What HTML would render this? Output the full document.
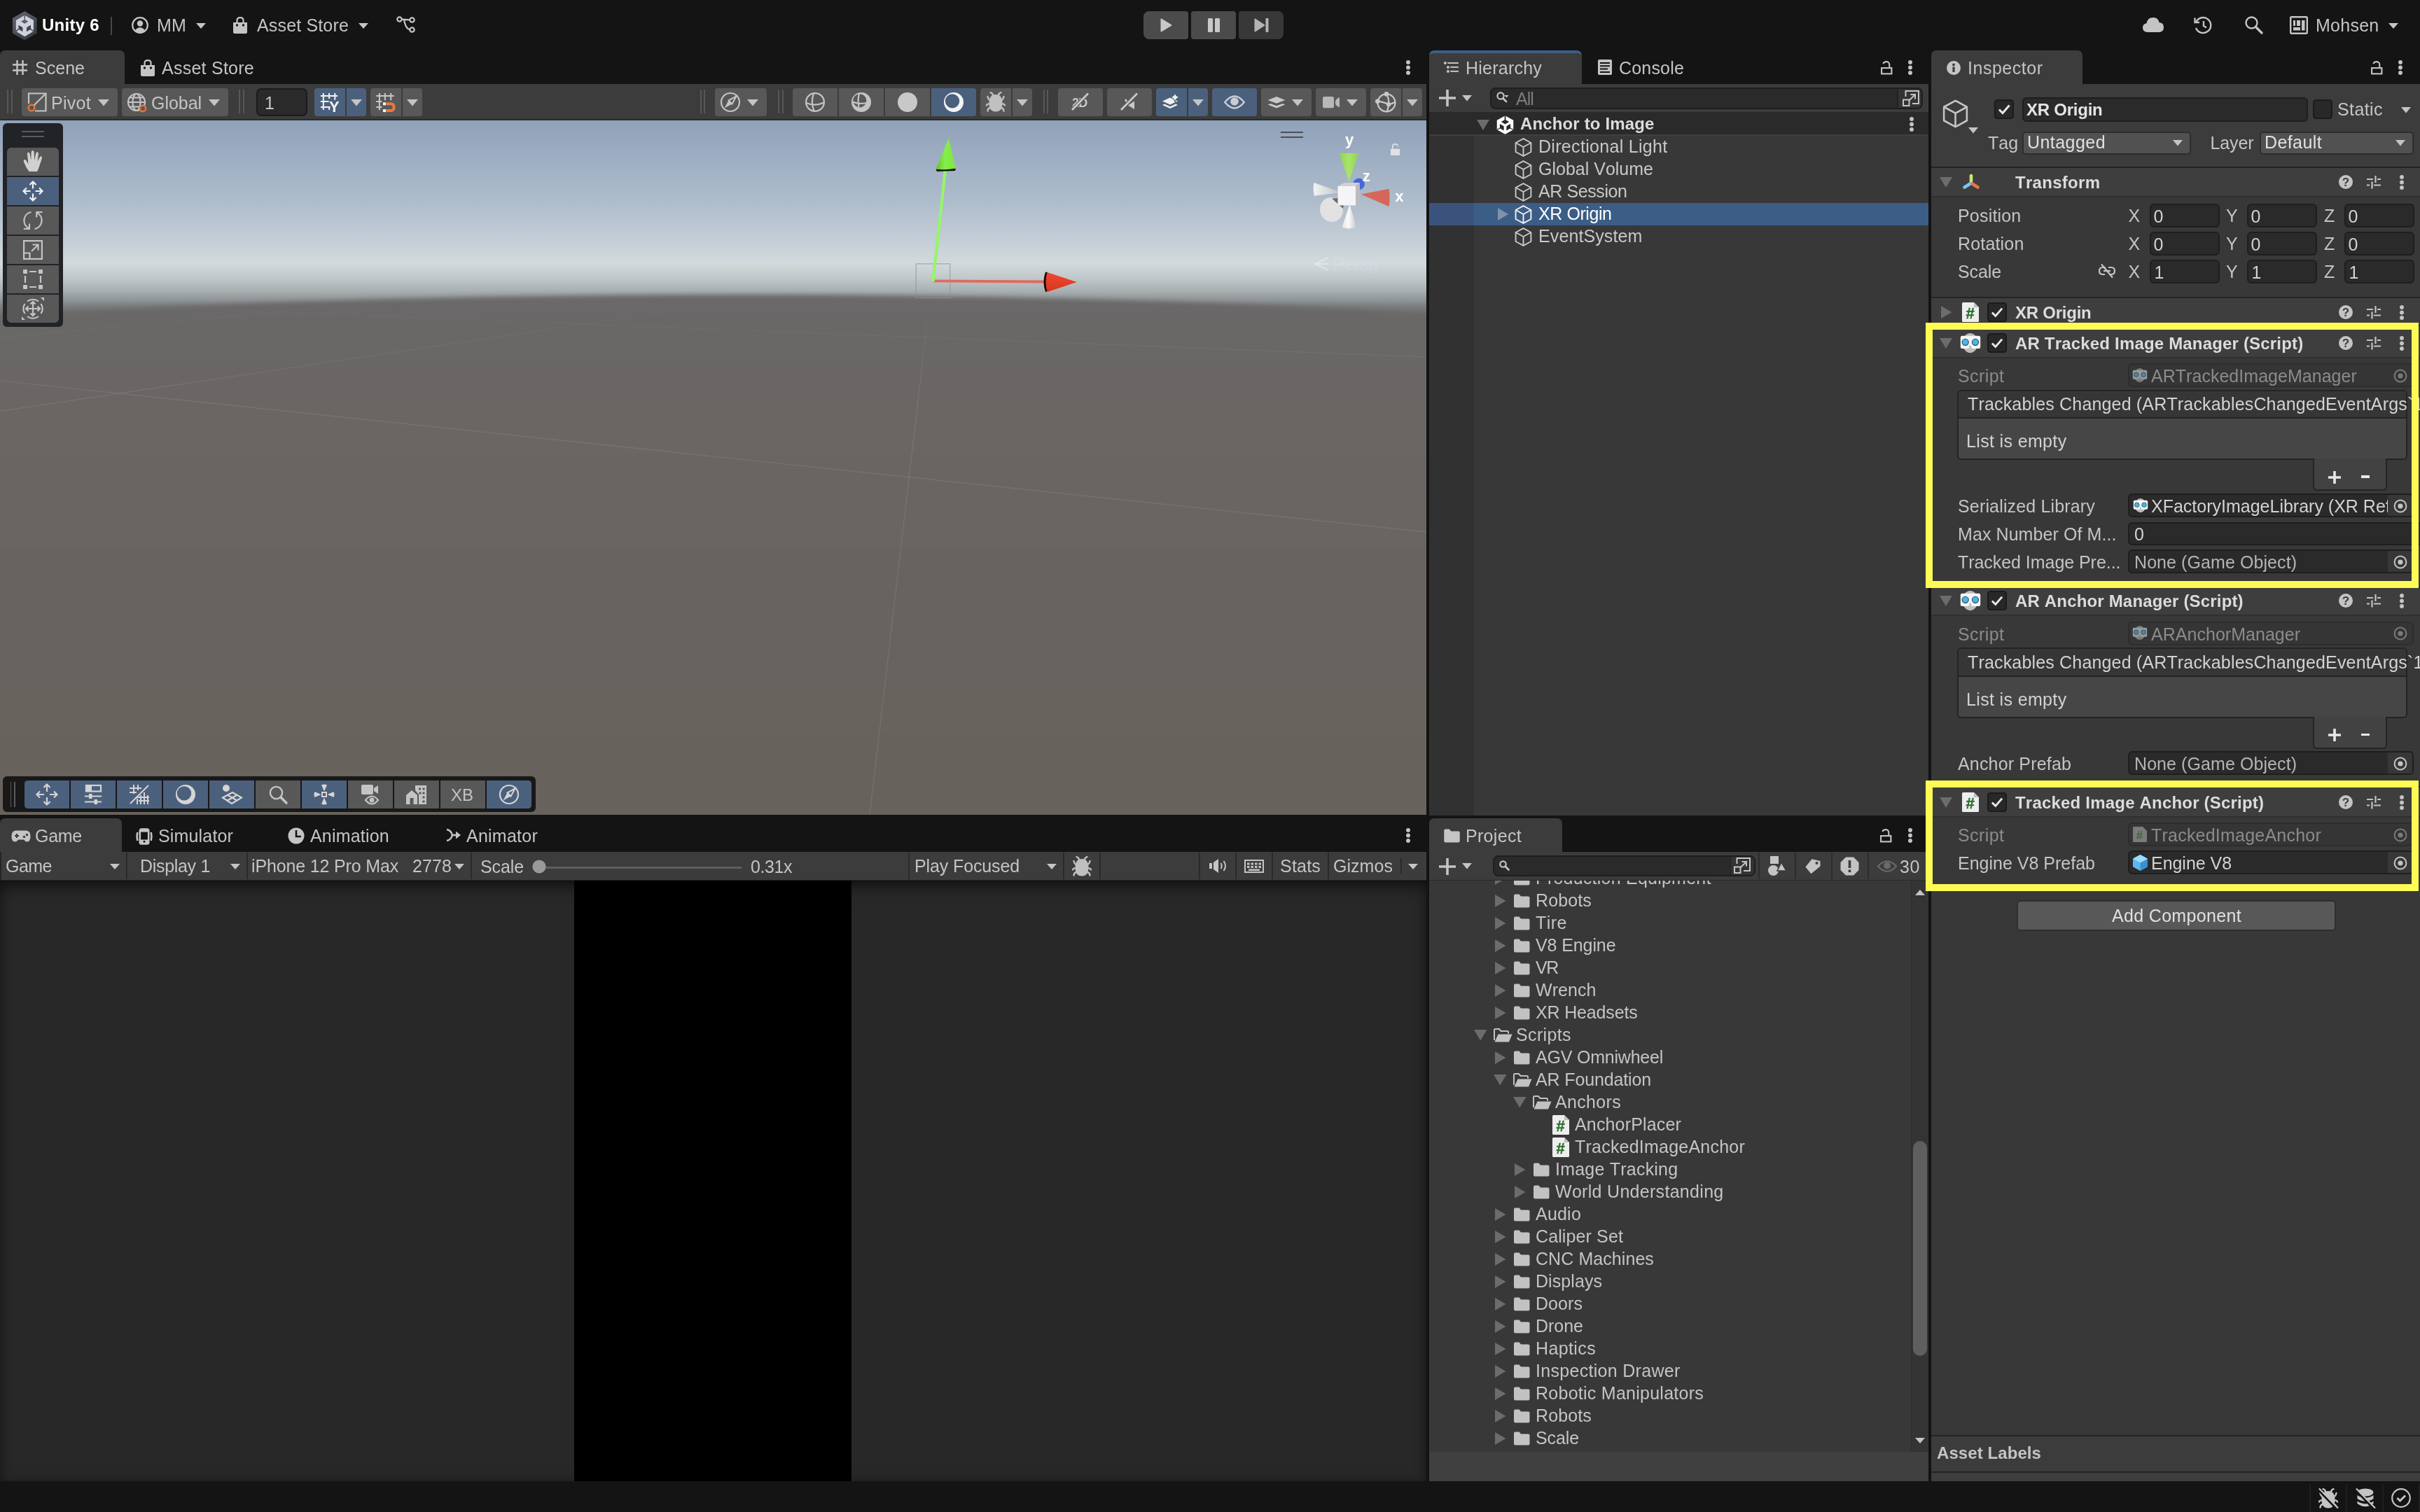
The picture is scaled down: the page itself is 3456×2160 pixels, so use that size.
<!DOCTYPE html>
<html><head><meta charset="utf-8"><title>Unity Editor</title>
<style>
html,body{margin:0;padding:0;background:#141414;}
body{width:3456px;height:2160px;overflow:hidden;position:relative;font-family:"Liberation Sans",sans-serif;font-kerning:none;will-change:transform;}
body div,body span,body svg{position:absolute;box-sizing:border-box;}
body span{white-space:nowrap;}
svg{overflow:visible;}
</style></head><body>
<div style="left:0px;top:0px;width:3456px;height:72px;background:#141414;"></div>
<svg style="left:17px;top:15px;" width="37" height="44" viewBox="0 0 37 44"><defs><linearGradient id="ulg" x1="0" y1="0" x2="0.600" y2="1"><stop offset="0" stop-color="#626771"/><stop offset="1" stop-color="#393c44"/></linearGradient></defs><path d="M18.200 0.900 L35.600 11 V32.500 L18.200 42.500 L0.900 32.500 V11 Z" fill="url(#ulg)"/><path d="M18.200 6.800 L30.900 14 V29.800 L18.200 37.200 L5.800 29.800 V14 Z" fill="#cdd2dc"/><path d="M18.200 12.700 L23.400 15.700 L18.200 18.700 L13 15.700 Z" fill="#5a5f69"/><path d="M18.200 6.800 V12.700" stroke="#5a5f69" stroke-width="1.600"/><path d="M9.400 20.800 L15.400 24.300 V30.200 L9.400 26.700 Z" fill="#41454d"/><path d="M9.400 26.700 L5.800 29.800" stroke="#41454d" stroke-width="1.600"/><path d="M27 20.800 L21 24.300 V30.200 L27 26.700 Z" fill="#41454d"/><path d="M27 26.700 L30.900 29.800" stroke="#41454d" stroke-width="1.600"/></svg>
<span style="left:60px;top:21px;font-size:24px;line-height:30px;color:#ffffff;font-weight:bold;letter-spacing:0.28px;">Unity 6</span>
<div style="left:158px;top:24px;width:2px;height:25.5px;background:#484848;"></div>
<svg style="left:188px;top:24px;" width="24" height="24" viewBox="0 0 24 24"><circle cx="12" cy="12" r="10.8" fill="none" stroke="#c4c4c4" stroke-width="2.2"/><circle cx="12" cy="9.5" r="4.2" fill="#c4c4c4"/><path d="M4.5 19.5 Q12 11 19.5 19.5 Q12 25.5 4.5 19.5 Z" fill="#c4c4c4"/></svg>
<span style="left:224px;top:21px;font-size:25px;line-height:30px;color:#c4c4c4;letter-spacing:0.17px;">MM</span>
<svg style="left:280px;top:32.5px;" width="14" height="8" viewBox="0 0 14 8"><path d="M0 0H14 L7 8 Z" fill="#c4c4c4"/></svg>
<svg style="left:333px;top:24px;" width="20" height="24" viewBox="0 0 20 24"><path d="M0 8 H20 V21.5 Q20 24 17.5 24 H2.5 Q0 24 0 21.5 Z" fill="#c4c4c4"/><path d="M5.5 11 V5 Q5.5 1.2 10 1.2 Q14.5 1.2 14.5 5 V11" fill="none" stroke="#c4c4c4" stroke-width="2.2"/><circle cx="5.5" cy="12" r="1.7" fill="#141414"/><circle cx="14.5" cy="12" r="1.7" fill="#141414"/></svg>
<span style="left:367px;top:21px;font-size:25px;line-height:30px;color:#c4c4c4;letter-spacing:0.16px;">Asset Store</span>
<svg style="left:512px;top:32.5px;" width="14" height="8" viewBox="0 0 14 8"><path d="M0 0H14 L7 8 Z" fill="#c4c4c4"/></svg>
<svg style="left:566px;top:23px;" width="27" height="24" viewBox="0 0 27 24"><g fill="none" stroke="#c4c4c4" stroke-width="2.2"><circle cx="4.5" cy="4.5" r="3.2"/><circle cx="22.5" cy="5.5" r="3.2"/><circle cx="22.5" cy="19.5" r="3.2"/><path d="M7.7 4.7 L19.3 5.3 M11 5 Q13 18 19.3 19.3"/></g></svg>
<div style="left:1633px;top:16px;width:64px;height:40px;background:#4b4b4b;border-radius:8px 4px 4px 8px;"></div>
<div style="left:1701px;top:16px;width:64px;height:40px;background:#4b4b4b;border-radius:4px;"></div>
<div style="left:1769px;top:16px;width:64px;height:40px;background:#383838;border-radius:4px 8px 8px 4px;"></div>
<svg style="left:1657px;top:26px;" width="17" height="20" viewBox="0 0 17 20"><path d="M0.5 1.5 Q0.5 0 2 0.8 L16 9.2 Q17 10 16 10.8 L2 19.2 Q0.5 20 0.5 18.5 Z" fill="#c8c8c8"/></svg>
<div style="left:1725px;top:26px;width:6.5px;height:20px;background:#c8c8c8;border-radius:1.5px;"></div>
<div style="left:1735px;top:26px;width:6.5px;height:20px;background:#c8c8c8;border-radius:1.5px;"></div>
<svg style="left:1791px;top:26px;" width="21" height="20" viewBox="0 0 21 20"><path d="M0.5 1.5 Q0.5 0 2 0.8 L15 9.2 Q16 10 15 10.8 L2 19.2 Q0.5 20 0.5 18.5 Z" fill="#b4b4b4"/><rect x="16.5" y="0" width="4" height="20" rx="1" fill="#b4b4b4"/></svg>
<svg style="left:3060px;top:25px;" width="30" height="21" viewBox="0 0 30 21"><path d="M7 21 Q0 21 0 14.5 Q0 9 5.5 8.3 Q7 0 15 0 Q22 0 23.5 7 Q30 7.5 30 14 Q30 21 23 21 Z" fill="#c4c4c4"/></svg>
<svg style="left:3133px;top:23px;" width="27" height="26" viewBox="0 0 27 26"><g fill="none" stroke="#c4c4c4" stroke-width="2.4"><path d="M3.5 8 A11 11 0 1 1 3 17"/><path d="M1.5 2.5 V9 H8"/><path d="M14 7 V14 L18 16.5"/></g></svg>
<svg style="left:3206px;top:23px;" width="26" height="26" viewBox="0 0 26 26"><circle cx="9.5" cy="9.5" r="8" fill="none" stroke="#c4c4c4" stroke-width="2.4"/><path d="M15.5 15.5 L24 24" stroke="#c4c4c4" stroke-width="3.4" stroke-linecap="round"/></svg>
<svg style="left:3270px;top:23px;" width="26" height="26" viewBox="0 0 26 26"><rect x="1.2" y="1.2" width="23.6" height="23.6" rx="1.5" fill="none" stroke="#c4c4c4" stroke-width="2.4"/><rect x="5" y="6" width="3" height="8" fill="#c4c4c4"/><rect x="10" y="6" width="5" height="8" fill="#c4c4c4"/><rect x="17" y="6" width="4.5" height="14.5" fill="#c4c4c4"/><rect x="5" y="16" width="10" height="4.5" fill="#c4c4c4"/></svg>
<span style="left:3307px;top:21px;font-size:25px;line-height:30px;color:#c4c4c4;letter-spacing:0.26px;">Mohsen</span>
<svg style="left:3411px;top:32.5px;" width="14" height="8" viewBox="0 0 14 8"><path d="M0 0H14 L7 8 Z" fill="#c4c4c4"/></svg>
<div style="left:0px;top:72px;width:2037px;height:48px;background:#141414;"></div>
<div style="left:0px;top:72px;width:178px;height:49px;background:#3c3c3c;border-radius:7px 7px 0 0;"></div>
<svg style="left:18px;top:86px;" width="21" height="21" viewBox="0 0 21 21"><g stroke="#c4c4c4" stroke-width="2.4"><path d="M6.5 0 V21 M14.5 0 V21 M0 6.5 H21 M0 14.5 H21"/></g></svg>
<span style="left:50px;top:81.5px;font-size:25px;line-height:30px;color:#c4c4c4;letter-spacing:0.02px;">Scene</span>
<svg style="left:201px;top:85px;" width="20" height="24" viewBox="0 0 20 24"><path d="M0 8 H20 V21.5 Q20 24 17.5 24 H2.5 Q0 24 0 21.5 Z" fill="#c4c4c4"/><path d="M5.5 11 V5 Q5.5 1.2 10 1.2 Q14.5 1.2 14.5 5 V11" fill="none" stroke="#c4c4c4" stroke-width="2.2"/><circle cx="5.5" cy="12" r="1.7" fill="#141414"/><circle cx="14.5" cy="12" r="1.7" fill="#141414"/></svg>
<span style="left:231px;top:81.5px;font-size:25px;line-height:30px;color:#c4c4c4;letter-spacing:0.25px;">Asset Store</span>
<svg style="left:2007px;top:84.5px;" width="8" height="23" viewBox="0 0 8 23"><circle cx="4" cy="4" r="2.95" fill="#c4c4c4"/><circle cx="4" cy="11.5" r="2.95" fill="#c4c4c4"/><circle cx="4" cy="19" r="2.95" fill="#c4c4c4"/></svg>
<div style="left:0px;top:120px;width:2037px;height:52px;background:#3c3c3c;"></div>
<div style="left:0px;top:170px;width:2037px;height:2px;background:#2b2b2b;"></div>
<div style="left:10.3px;top:128px;width:2px;height:34px;background:#575757;"></div>
<div style="left:15.8px;top:128px;width:2px;height:34px;background:#575757;"></div>
<div style="left:31px;top:126px;width:137px;height:40px;background:#585858;border-radius:4px;"></div>
<svg style="left:37px;top:130px;" width="32" height="32" viewBox="0 0 32 32"><path d="M4 18 V3.500 H28.500 V28.500 H13" fill="none" stroke="#c4c4c4" stroke-width="2.200"/><path d="M11 21 L28 4" stroke="#c4c4c4" stroke-width="2.200"/><circle cx="8" cy="24" r="4.400" fill="#585858" stroke="#e8743a" stroke-width="2.400"/></svg>
<span style="left:73px;top:131.5px;font-size:25px;line-height:30px;color:#c4c4c4;letter-spacing:0.28px;">Pivot</span>
<svg style="left:140px;top:141.9px;" width="16" height="9.6" viewBox="0 0 16 9.6"><path d="M0 0H16 L8 9.6 Z" fill="#c4c4c4"/></svg>
<div style="left:174px;top:126px;width:152px;height:40px;background:#585858;border-radius:4px;"></div>
<svg style="left:182px;top:132px;" width="30" height="30" viewBox="0 0 30 30"><g fill="none" stroke="#c4c4c4" stroke-width="2.2"><circle cx="13" cy="14" r="12"/><ellipse cx="13" cy="14" rx="5.5" ry="12"/><path d="M1 14 H25 M3 7.5 H23 M3 20.5 H23"/></g><circle cx="22" cy="23" r="4.2" fill="#585858" stroke="#e8743a" stroke-width="2.4"/></svg>
<span style="left:216px;top:131.5px;font-size:25px;line-height:30px;color:#c4c4c4;letter-spacing:-0.04px;">Global</span>
<svg style="left:298px;top:141.9px;" width="16" height="9.6" viewBox="0 0 16 9.6"><path d="M0 0H16 L8 9.6 Z" fill="#c4c4c4"/></svg>
<div style="left:341.3px;top:128px;width:2px;height:34px;background:#575757;"></div>
<div style="left:346.8px;top:128px;width:2px;height:34px;background:#575757;"></div>
<div style="left:366px;top:126px;width:73px;height:40px;background:#2a2a2a;border:2px solid #1b1b1b;border-radius:7px;"></div>
<span style="left:378px;top:132px;font-size:25px;line-height:30px;color:#c4c4c4;">1</span>
<div style="left:449px;top:126px;width:44px;height:40px;background:#4b607c;border-radius:4px 0 0 4px;"></div>
<div style="left:494.5px;top:126px;width:28.5px;height:40px;background:#4b607c;border-radius:0 4px 4px 0;"></div>
<svg style="left:456px;top:131px;" width="32" height="32" viewBox="0 0 32 32"><g stroke="#f2f2f2" stroke-width="2" fill="none"><path d="M5.800 2 V25.900 M14.100 2 V10 M14.100 22.700 V25.900 M22.300 2 V11.800 M1.900 5.900 H26.100 M1.900 13.900 H13.500 M1.900 22 H15.600"/></g><text x="21.300" y="29" font-family="Liberation Sans, sans-serif" font-weight="bold" font-size="22" fill="#f2f2f2" text-anchor="middle">Y</text></svg>
<svg style="left:501px;top:141.9px;" width="16" height="9.6" viewBox="0 0 16 9.6"><path d="M0 0H16 L8 9.6 Z" fill="#c4c4c4"/></svg>
<div style="left:529px;top:126px;width:44px;height:40px;background:#585858;border-radius:4px 0 0 4px;"></div>
<div style="left:574.5px;top:126px;width:28.5px;height:40px;background:#585858;border-radius:0 4px 4px 0;"></div>
<svg style="left:536px;top:131px;" width="32" height="32" viewBox="0 0 32 32"><g stroke="#c8c8c8" stroke-width="2" fill="none"><path d="M5.900 2 V26.200 M13.900 2 V12.200 M22.200 2 V12.200 M1.300 5.900 H26.600 M1.300 13.900 H9.400 M1.300 22 H9.400"/></g><path d="M15.500 17.300 H21.500 Q26.700 17.300 26.700 22.200 Q26.700 27 21.500 27 H15.500" fill="none" stroke="#ea7840" stroke-width="4"/><rect x="10.900" y="15.300" width="4.200" height="4" fill="#f4f4f4"/><rect x="10.900" y="25.100" width="4.200" height="4" fill="#f4f4f4"/></svg>
<svg style="left:581px;top:141.9px;" width="16" height="9.6" viewBox="0 0 16 9.6"><path d="M0 0H16 L8 9.6 Z" fill="#c4c4c4"/></svg>
<div style="left:999.8px;top:128px;width:2px;height:34px;background:#575757;"></div>
<div style="left:1005.3px;top:128px;width:2px;height:34px;background:#575757;"></div>
<div style="left:1021px;top:126px;width:74px;height:40px;background:#585858;border-radius:4px;"></div>
<svg style="left:1028px;top:131px;" width="30" height="30" viewBox="0 0 30 30"><circle cx="15" cy="15" r="13" fill="none" stroke="#c4c4c4" stroke-width="2.2"/><path d="M23.5 6.5 L17.5 17.5 L12.5 12.5 Z" fill="none" stroke="#c4c4c4" stroke-width="2"/><path d="M6.5 23.5 L12.5 12.5 L17.5 17.5 Z" fill="#c4c4c4"/></svg>
<svg style="left:1067px;top:141.9px;" width="16" height="9.6" viewBox="0 0 16 9.6"><path d="M0 0H16 L8 9.6 Z" fill="#c4c4c4"/></svg>
<div style="left:1111.3px;top:128px;width:2px;height:34px;background:#575757;"></div>
<div style="left:1116.8px;top:128px;width:2px;height:34px;background:#575757;"></div>
<div style="left:1132px;top:126px;width:64px;height:40px;background:#585858;border-radius:4px 0 0 4px;"></div>
<div style="left:1198px;top:126px;width:64px;height:40px;background:#585858;border-radius:0;"></div>
<div style="left:1264px;top:126px;width:64px;height:40px;background:#585858;border-radius:0;"></div>
<div style="left:1330px;top:126px;width:64px;height:40px;background:#4b607c;border-radius:0 4px 4px 0;"></div>
<svg style="left:1150px;top:132px;" width="28" height="28" viewBox="0 0 28 28"><g fill="none" stroke="#c4c4c4" stroke-width="2.200"><circle cx="14" cy="14" r="12.900"/><path d="M12 1.300 Q7.500 14 12.500 26.800 M1.300 15 Q14 20.500 26.700 14.500"/></g></svg>
<svg style="left:1216px;top:132px;" width="28" height="28" viewBox="0 0 28 28"><path fill-rule="evenodd" fill="#c4c4c4" d="M14 0 A14 14 0 1 0 14 28 A14 14 0 1 0 14 0 Z M11.800 2.200 A9.600 9.600 0 1 1 11.800 21.400 A9.600 9.600 0 1 1 11.800 2.200 Z"/><path d="M11 1.500 Q8.500 11 10.500 21.500 M2 13.500 Q11 17.500 21 15" fill="none" stroke="#c4c4c4" stroke-width="2.200"/></svg>
<svg style="left:1282px;top:132px;" width="28" height="28" viewBox="0 0 28 28"><circle cx="14" cy="14" r="14" fill="#c8c8c8"/></svg>
<svg style="left:1348px;top:132px;" width="28" height="28" viewBox="0 0 28 28"><path fill-rule="evenodd" fill="#f4f4f4" d="M14 0 A14 14 0 1 0 14 28 A14 14 0 1 0 14 0 Z M12 2.200 A10.200 10.200 0 1 1 12 22.600 A10.200 10.200 0 1 1 12 2.200 Z"/></svg>
<div style="left:1400px;top:126px;width:44px;height:40px;background:#585858;border-radius:4px 0 0 4px;"></div>
<div style="left:1445.5px;top:126px;width:28.5px;height:40px;background:#585858;border-radius:0 4px 4px 0;"></div>
<svg style="left:1408px;top:131px;" width="28" height="29" viewBox="0 0 28 29"><path d="M14 4 Q23.500 4 23.500 16.500 Q23.500 28.500 14 28.500 Q4.500 28.500 4.500 16.500 Q4.500 4 14 4 Z" fill="#c0c0c0"/><g stroke="#c0c0c0" stroke-width="2.400" fill="none" stroke-linecap="round"><path d="M10 5 Q9.500 2 6.500 1.200 M18 5 Q18.500 2 21.500 1.200"/><path d="M6 12 Q3.500 11.500 2.500 7 M22 12 Q24.500 11.500 25.500 7 M5 17.500 Q2 17 1 19.500 M23 17.500 Q26 17 27 19.500 M6 23 Q3 23.500 2.500 27.500 M22 23 Q25 23.500 25.500 27.500"/></g></svg>
<svg style="left:1452px;top:141.9px;" width="16" height="9.6" viewBox="0 0 16 9.6"><path d="M0 0H16 L8 9.6 Z" fill="#c4c4c4"/></svg>
<div style="left:1489.8px;top:128px;width:2px;height:34px;background:#575757;"></div>
<div style="left:1495.3px;top:128px;width:2px;height:34px;background:#575757;"></div>
<div style="left:1511px;top:126px;width:64px;height:40px;background:#585858;border-radius:4px;"></div>
<svg style="left:1528px;top:132px;" width="30" height="28" viewBox="0 0 30 28"><text x="3" y="21" font-family="Liberation Sans, sans-serif" font-weight="bold" font-size="18" fill="#c8c8c8" letter-spacing="-0.800">2D</text><path d="M3 25 L26 1.500" stroke="#585858" stroke-width="5"/><path d="M3 25 L26 1.500" stroke="#c8c8c8" stroke-width="2.800"/></svg>
<div style="left:1581px;top:126px;width:64px;height:40px;background:#585858;border-radius:4px;"></div>
<svg style="left:1598px;top:132px;" width="30" height="28" viewBox="0 0 30 28"><path d="M9 10 L12.500 15.500 L17 10" fill="none" stroke="#c8c8c8" stroke-width="2.600"/><path d="M13 18.500 L22 12.500 V24 Z" fill="#c8c8c8"/><path d="M3 25 L26 1.500" stroke="#585858" stroke-width="5"/><path d="M3 25 L26 1.500" stroke="#c8c8c8" stroke-width="2.800"/></svg>
<div style="left:1651px;top:126px;width:44px;height:40px;background:#4b607c;border-radius:4px 0 0 4px;"></div>
<div style="left:1696.5px;top:126px;width:28.5px;height:40px;background:#4b607c;border-radius:0 4px 4px 0;"></div>
<svg style="left:1659px;top:132px;" width="30" height="28" viewBox="0 0 30 28"><path d="M1 12.5 L12 7.5 L23 12.5 L12 17.5 Z" fill="#f0f0f0"/><path d="M1 18 L12 23 L23 18 L20 16.6 L12 20.3 L4 16.6 Z" fill="#f0f0f0"/><path d="M19 0 Q20 6 26 7 Q20 8 19 14 Q18 8 12 7 Q18 6 19 0 Z" fill="#f0f0f0" stroke="#4b607c" stroke-width="1.2"/></svg>
<svg style="left:1703px;top:141.9px;" width="16" height="9.6" viewBox="0 0 16 9.6"><path d="M0 0H16 L8 9.6 Z" fill="#c4c4c4"/></svg>
<div style="left:1731px;top:126px;width:64px;height:40px;background:#4b607c;border-radius:4px;"></div>
<svg style="left:1748px;top:135px;" width="30" height="22" viewBox="0 0 30 22"><path d="M1.2 11 Q15 -6 28.8 11 Q15 28 1.2 11 Z" fill="none" stroke="#c8cdd6" stroke-width="2.4"/><circle cx="15" cy="10" r="5.8" fill="#c8cdd6"/></svg>
<div style="left:1801px;top:126px;width:72px;height:40px;background:#585858;border-radius:4px;"></div>
<svg style="left:1810px;top:137px;" width="26" height="19" viewBox="0 0 26 19"><path d="M0.700 5.900 L13 1 L25.300 5.900 L13 10.800 Z" fill="#c8c8c8"/><path d="M0.700 12.400 L13 17.600 L25.300 12.400 L21.500 10.900 L13 14.300 L4.500 10.900 Z" fill="#c8c8c8"/></svg>
<svg style="left:1845px;top:141.9px;" width="16" height="9.6" viewBox="0 0 16 9.6"><path d="M0 0H16 L8 9.6 Z" fill="#c4c4c4"/></svg>
<div style="left:1879px;top:126px;width:72px;height:40px;background:#585858;border-radius:4px;"></div>
<svg style="left:1889px;top:138px;" width="25" height="17" viewBox="0 0 25 17"><rect x="0" y="0" width="16" height="16.200" rx="2.500" fill="#b8b8b8"/><path d="M18 7 Q18 5 20 3.500 L22.500 1.500 Q24 0.500 24 2.500 V14 Q24 16 22.500 15 L20 13 Q18 11.500 18 9.500 Z" fill="#b8b8b8"/></svg>
<svg style="left:1923px;top:141.9px;" width="16" height="9.6" viewBox="0 0 16 9.6"><path d="M0 0H16 L8 9.6 Z" fill="#c4c4c4"/></svg>
<div style="left:1957px;top:126px;width:44px;height:40px;background:#585858;border-radius:4px 0 0 4px;"></div>
<div style="left:2002.5px;top:126px;width:28.5px;height:40px;background:#585858;border-radius:0 4px 4px 0;"></div>
<svg style="left:1964px;top:131px;" width="30" height="30" viewBox="0 0 30 30"><g fill="none" stroke="#c8c8c8" stroke-width="2.200"><circle cx="16" cy="15.800" r="12.500"/><path d="M16 3.200 Q20 10 19.100 18.200 M3.100 13.800 Q11 14 19.100 18.200 M19.100 18.200 Q18.500 24 16.800 28 M19.100 18.200 Q24 17.500 28.400 14.800"/></g><circle cx="16" cy="3.400" r="3.300" fill="#c8c8c8"/><circle cx="3.300" cy="13.800" r="3.300" fill="#c8c8c8"/><circle cx="19.100" cy="18.200" r="3.100" fill="#c8c8c8"/></svg>
<svg style="left:2009px;top:141.9px;" width="16" height="9.6" viewBox="0 0 16 9.6"><path d="M0 0H16 L8 9.6 Z" fill="#c4c4c4"/></svg>
<div style="left:0;top:172px;width:2037px;height:992px;overflow:hidden;background:#6a6562;"><svg style="left:0;top:0" width="2037" height="992" viewBox="0 0 2037 992"><defs><linearGradient id="sky" x1="0" y1="0" x2="0" y2="1"><stop offset="0" stop-color="#90a2ba"/><stop offset="0.12" stop-color="#afbdcc"/><stop offset="0.17" stop-color="#c3cdd6"/><stop offset="0.2056" stop-color="#d2dadd"/><stop offset="0.227" stop-color="#c1c8ca"/><stop offset="0.246" stop-color="#a8afb1"/><stop offset="0.259" stop-color="#8f9496"/><stop offset="0.267" stop-color="#7c7f80"/><stop offset="0.282" stop-color="#6e6d6e"/><stop offset="1" stop-color="#6e6b6b"/></linearGradient><linearGradient id="gnd" x1="0" y1="0" x2="0" y2="1"><stop offset="0" stop-color="#6b6767"/><stop offset="0.500" stop-color="#69645f"/><stop offset="1" stop-color="#67615b"/></linearGradient><filter id="bl" x="-5%" y="-5%" width="110%" height="110%"><feGaussianBlur stdDeviation="3.5"/></filter></defs><rect x="0" y="0" width="2037" height="992" fill="url(#sky)"/><path d="M-40 280 Q1050 218.200 2140 280 V1040 H-40 Z" fill="url(#gnd)" filter="url(#bl)"/><defs><linearGradient id="fm" x1="0" y1="0" x2="0" y2="1"><stop offset="0.250" stop-color="#000"/><stop offset="0.400" stop-color="#fff"/></linearGradient><mask id="fmk" maskUnits="userSpaceOnUse" x="0" y="0" width="2037" height="992"><rect x="0" y="0" width="2037" height="992" fill="url(#fm)"/></mask></defs><g stroke="#ffffff" stroke-opacity="0.100" stroke-width="1.200" fill="none" mask="url(#fmk)"><path d="M0 415.500 L1000 266"/><path d="M0 372 L2037 588"/><path d="M250 268 L2037 338"/><path d="M1328 255 L1242 992"/><path d="M0 310 L700 246"/></g></svg></div>
<svg style="left:1290px;top:190px;" width="260" height="250" viewBox="0 0 260 250"><defs><linearGradient id="mg" x1="0" y1="0" x2="1" y2="0"><stop offset="0" stop-color="#5fc22a"/><stop offset="0.450" stop-color="#86ee4a"/><stop offset="1" stop-color="#7ee442"/></linearGradient><linearGradient id="mr" x1="0" y1="0" x2="0" y2="1"><stop offset="0" stop-color="#ef4a30"/><stop offset="1" stop-color="#d8341e"/></linearGradient></defs><rect x="18.200" y="186.900" width="48.600" height="48.400" fill="none" stroke="#8e9496" stroke-opacity="0.800" stroke-width="1.100"/><path d="M42 211.400 L203 212.500" stroke="#de6b61" stroke-width="3.800"/><path d="M42.400 212.500 L59.900 53" stroke="#96f569" stroke-width="4.300"/><path d="M46.400 51.500 L75 50.600 L74 54 L48 55 Z" fill="#101a08"/><path d="M64.900 7.600 L75 50.600 Q60 53.500 46.400 51.500 Z" fill="url(#mg)"/><path d="M203 198.500 L206 199 V226 L203 227 Q198 213 203 198.500 Z" fill="#1c0a06"/><path d="M247.900 213 L205.500 227 Q201.500 213 205.500 199 Z" fill="url(#mr)"/></svg>
<div style="left:4px;top:176px;width:86px;height:291px;background:#212327;border-radius:6px;"></div>
<div style="left:31px;top:187px;width:32px;height:2px;background:#5a5a5a;"></div>
<div style="left:31px;top:194px;width:32px;height:2px;background:#5a5a5a;"></div>
<div style="left:10px;top:211px;width:74px;height:40px;background:#585858;border-radius:6px 6px 0 0;"></div>
<div style="left:10px;top:253px;width:74px;height:40px;background:#4b607c;border-radius:0;"></div>
<div style="left:10px;top:295px;width:74px;height:40px;background:#585858;border-radius:0;"></div>
<div style="left:10px;top:337px;width:74px;height:40px;background:#585858;border-radius:0;"></div>
<div style="left:10px;top:379px;width:74px;height:40px;background:#585858;border-radius:0;"></div>
<div style="left:10px;top:421px;width:74px;height:40px;background:#585858;border-radius:0 0 6px 6px;"></div>
<svg style="left:33px;top:215px;" width="28" height="31" viewBox="0 0 28 31"><path d="M8.5 30 Q4 24 1 16.5 Q0 13.5 2 13 Q4 12.8 5.5 16 L7.5 19.5 L6 5 Q5.8 2.5 7.6 2.5 Q9.2 2.5 9.6 5 L11.3 14 L11.6 2.5 Q11.7 0 13.7 0 Q15.6 0 15.7 2.5 L16.2 14 L18.3 4 Q18.8 1.8 20.5 2.2 Q22.2 2.6 21.9 5 L20.6 15.5 L23.8 9.5 Q24.8 7.8 26.2 8.6 Q27.5 9.4 26.8 11.5 Q24.5 18.5 23 23 Q21.5 27.5 20 30 Z" fill="#d0d0d0"/></svg>
<svg style="left:32px;top:258px;" width="30" height="30" viewBox="0 0 30 30"><g fill="none" stroke="#f2f2f2" stroke-width="2.2"><path d="M15 1.5 V11.5 M15 18.5 V28.5 M1.5 15 H11.5 M18.5 15 H28.5"/><path d="M10.5 6 L15 1.5 L19.5 6 M10.5 24 L15 28.5 L19.5 24 M6 10.5 L1.5 15 L6 19.5 M24 10.5 L28.5 15 L24 19.5"/></g></svg>
<svg style="left:33px;top:300px;" width="28" height="30" viewBox="0 0 28 30"><g fill="none" stroke="#c4c4c4" stroke-width="2.200"><path d="M11.500 3 A12.300 12.300 0 0 0 8 26"/><path d="M0.800 27 H9 V19.500"/><path d="M16.500 27 A12.300 12.300 0 0 0 20 4"/><path d="M27.500 3 H19.300 V10.600"/></g></svg>
<svg style="left:33px;top:343px;" width="28" height="28" viewBox="0 0 28 28"><g fill="none" stroke="#c4c4c4" stroke-width="2.2"><rect x="1.1" y="1.1" width="25.8" height="25.8"/><path d="M1 18.5 H9.5 V27"/><path d="M12 16 L21.5 6.5 M13.5 6.5 H21.5 V14.5"/></g></svg>
<svg style="left:33px;top:385px;" width="28" height="28" viewBox="0 0 28 28"><g fill="#c4c4c4"><rect x="0" y="0" width="6" height="6" rx="1"/><rect x="22" y="0" width="6" height="6" rx="1"/><rect x="0" y="22" width="6" height="6" rx="1"/><rect x="22" y="22" width="6" height="6" rx="1"/></g><g stroke="#c4c4c4" stroke-width="2.2"><path d="M9 3 H19 M9 25 H19 M3 9 V19 M25 9 V19"/></g></svg>
<svg style="left:31px;top:425px;" width="32" height="32" viewBox="0 0 32 32"><g fill="none" stroke="#c4c4c4" stroke-width="2.2"><path d="M8 5.5 A13 13 0 0 1 24 5.5 M27.5 9 A13 13 0 0 1 27.5 23 M24 27 A13 13 0 0 1 8 27 M4.5 23 A13 13 0 0 1 4.5 9"/><path d="M16 6 V26 M6 16 H26 M12.5 9.5 L16 6 L19.5 9.5 M12.5 22.5 L16 26 L19.5 22.5 M9.5 12.5 L6 16 L9.5 19.5 M22.5 12.5 L26 16 L22.5 19.5"/></g><path d="M27 0 H32 V5 Z M0 27 V32 H5 Z" fill="#c4c4c4"/></svg>
<div style="left:1829px;top:188px;width:32px;height:2px;background:#4a4f58;"></div>
<div style="left:1829px;top:194.5px;width:32px;height:2px;background:#4a4f58;"></div>
<svg style="left:1860px;top:185px;" width="160" height="160" viewBox="0 0 160 160"><defs><linearGradient id="wc" x1="0" y1="0" x2="1" y2="0"><stop offset="0" stop-color="#f4f4f4"/><stop offset="1" stop-color="#c4c6c8"/></linearGradient><linearGradient id="wc2" x1="0" y1="0" x2="1" y2="0"><stop offset="0" stop-color="#e4e4e4"/><stop offset="0.450" stop-color="#fafafa"/><stop offset="1" stop-color="#c8c8c8"/></linearGradient><linearGradient id="gc" x1="0" y1="0" x2="1" y2="0"><stop offset="0" stop-color="#8fd44e"/><stop offset="0.500" stop-color="#aae46c"/><stop offset="1" stop-color="#8fd44e"/></linearGradient></defs><path d="M16.500 76 Q14.500 85.500 17 94.800 L50.500 90.500 V88 Z" fill="url(#wc)"/><ellipse cx="41.400" cy="114.500" rx="16.400" ry="17.600" fill="#e2e2e2" transform="rotate(-18 41.400 114.500)"/><path d="M42 98.500 L61 97.500 L58 113 Z" fill="#6c6c6c"/><path d="M56.500 139.500 Q67 143.500 77 139.500 L67.500 107 Z" fill="url(#wc2)"/><circle cx="80.600" cy="78" r="8.300" fill="#4468d8"/><path d="M52.700 34 L80 34 L66.600 74.500 Z" fill="url(#gc)"/><path d="M83.600 92.600 L123.600 84.700 Q125.500 97 123.600 110 Z" fill="#d66758"/><path d="M50.500 81 L60 76 H82 L76 81 Z" fill="#d2d2d2"/><path d="M76 81 L82 76 V101 L76 108.400 Z" fill="#bcbcbc"/><rect x="50.500" y="81" width="25.500" height="27.400" fill="#f5f5f7"/><text x="67" y="22.400" font-family="Liberation Sans, sans-serif" font-weight="bold" font-size="22" fill="#ffffff" text-anchor="middle">y</text><text x="91.200" y="73.700" font-family="Liberation Sans, sans-serif" font-weight="bold" font-size="22" fill="#ffffff" text-anchor="middle">z</text><text x="138.300" y="103" font-family="Liberation Sans, sans-serif" font-weight="bold" font-size="22" fill="#ffffff" text-anchor="middle">x</text><g opacity="0.800"><rect x="126" y="27.700" width="13" height="9.200" fill="#f0f0f0"/><path d="M128.800 27.700 V24.500 Q128.800 20.800 132.500 20.800 Q135.800 20.800 136.300 23.500" fill="none" stroke="#f0f0f0" stroke-width="1.800"/></g></svg>
<span style="left:1904px;top:362px;font-size:25px;line-height:30px;color:rgba(235,240,242,0.19);letter-spacing:-0.26px;">Persp</span>
<svg style="left:1876px;top:367px;" width="22" height="20" viewBox="0 0 22 20"><path d="M21 1 L1.500 10 L21 19 M1.500 10 H21" fill="none" stroke="#eef2f4" stroke-opacity="0.5" stroke-width="2"/></svg>
<div style="left:4px;top:1109px;width:761px;height:51px;background:#181818;border-radius:6px;"></div>
<div style="left:14.5px;top:1117px;width:1.5px;height:36px;background:#5a5a5a;"></div>
<div style="left:20px;top:1117px;width:1.5px;height:36px;background:#5a5a5a;"></div>
<div style="left:35px;top:1115px;width:64px;height:40px;background:#4b607c;border-radius:4.500px 0 0 4.500px;"></div>
<div style="left:101px;top:1115px;width:64px;height:40px;background:#4b607c;border-radius:0;"></div>
<div style="left:167px;top:1115px;width:64px;height:40px;background:#4b607c;border-radius:0;"></div>
<div style="left:233px;top:1115px;width:64px;height:40px;background:#4b607c;border-radius:0;"></div>
<div style="left:299px;top:1115px;width:64px;height:40px;background:#4b607c;border-radius:0;"></div>
<div style="left:365px;top:1115px;width:64px;height:40px;background:#585858;border-radius:0;"></div>
<div style="left:431px;top:1115px;width:64px;height:40px;background:#4b607c;border-radius:0;"></div>
<div style="left:497px;top:1115px;width:64px;height:40px;background:#585858;border-radius:0;"></div>
<div style="left:563px;top:1115px;width:64px;height:40px;background:#585858;border-radius:0;"></div>
<div style="left:629px;top:1115px;width:64px;height:40px;background:#585858;border-radius:0;"></div>
<div style="left:695px;top:1115px;width:64px;height:40px;background:#4b607c;border-radius:0 4.500px 4.500px 0;"></div>
<svg style="left:51px;top:1119px;" width="32" height="32" viewBox="0 0 32 32"><g fill="none" stroke="#d4d4d4" stroke-width="2.2"><path d="M16 1.5 V12 M16 20 V30.5 M1.5 16 H12 M20 16 H30.5"/><path d="M11.5 6 L16 1.5 L20.5 6 M11.5 26 L16 30.5 L20.5 26 M6 11.5 L1.5 16 L6 20.5 M26 11.5 L30.5 16 L26 20.5"/></g></svg>
<svg style="left:120px;top:1121px;" width="26" height="28" viewBox="0 0 26 28"><rect x="3" y="1" width="21" height="8.5" fill="none" stroke="#d4d4d4" stroke-width="2.2"/><rect x="3" y="1" width="8" height="8.5" fill="#d4d4d4"/><g stroke="#d4d4d4" stroke-width="2.2"><path d="M1 16.5 H25 M1 24.5 H25"/></g><rect x="7" y="13" width="4.5" height="7" fill="#d4d4d4"/><rect x="14.500" y="21" width="4.5" height="7" fill="#d4d4d4"/></svg>
<svg style="left:184px;top:1120px;" width="30" height="30" viewBox="0 0 30 30"><g stroke="#d4d4d4" stroke-width="2" fill="none"><path d="M7 1 V14 M13 1 V9 M1 6 H18 M1 12 H11 M2 28 L28 2"/><path d="M17 16 V29 M22 12 V29 M27 16 V29 M12 21 V29 M10 19 H29 M14 24 H29"/></g></svg>
<svg style="left:251px;top:1121px;" width="28" height="28" viewBox="0 0 28 28"><path fill-rule="evenodd" fill="#d4d4d4" d="M14 0 A14 14 0 1 0 14 28 A14 14 0 1 0 14 0 Z M12 2.200 A10.200 10.200 0 1 1 12 22.600 A10.200 10.200 0 1 1 12 2.200 Z"/></svg>
<svg style="left:316px;top:1120px;" width="30" height="30" viewBox="0 0 30 30"><circle cx="7" cy="6" r="5" fill="#d4d4d4"/><g fill="none" stroke="#d4d4d4" stroke-width="2.2"><path d="M2 19.500 L16 12 L29 19.500 L15 28 Z"/><path d="M9 15.800 L22.500 23.500 M22.500 15.800 L8.500 23.800"/></g></svg>
<svg style="left:384px;top:1122px;" width="28" height="28" viewBox="0 0 28 28"><circle cx="10.500" cy="10.500" r="8.600" fill="none" stroke="#c4c4c4" stroke-width="2.4"/><path d="M17 17 L25 25" stroke="#c4c4c4" stroke-width="3.600" stroke-linecap="round"/></svg>
<svg style="left:448px;top:1120px;" width="30" height="30" viewBox="0 0 30 30"><rect x="12" y="12" width="6" height="6" fill="none" stroke="#d4d4d4" stroke-width="2"/><path d="M15 10.500 L11 1.500 Q15 -0.500 19 1.500 Z M15 19.500 L11 28.500 Q15 30.500 19 28.500 Z M10.500 15 L1.500 11 Q-0.500 15 1.500 19 Z M19.500 15 L28.500 11 Q30.500 15 28.500 19 Z" fill="#d4d4d4"/></svg>
<svg style="left:515px;top:1120px;" width="30" height="30" viewBox="0 0 30 30"><rect x="1" y="1" width="17" height="14" rx="2" fill="#c4c4c4"/><path d="M19 6 L25 2 V14 L19 10 Z" fill="#c4c4c4"/><path d="M7 23 Q16 12 25 23 Q16 34 7 23 Z" fill="#585858" stroke="#c4c4c4" stroke-width="2.2"/><circle cx="16" cy="23" r="3.400" fill="#c4c4c4"/></svg>
<svg style="left:580px;top:1121px;" width="30" height="28" viewBox="0 0 30 28"><path d="M0 28 V15 L8 8 L16 15 V28 H10.500 V19 H5.500 V28 Z" fill="#c4c4c4"/><path d="M13 8 V1 H29 V28 H18 V14 Z" fill="#c4c4c4"/><g fill="#585858"><rect x="18" y="4.500" width="3" height="3"/><rect x="23.500" y="4.500" width="3" height="3"/><rect x="23.500" y="10.500" width="3" height="3"/><rect x="23.500" y="16.500" width="3" height="3"/><rect x="23.500" y="22.500" width="3" height="3"/><rect x="18.500" y="10.500" width="3" height="3"/></g></svg>
<span style="left:644px;top:1120.5px;font-size:24px;line-height:30px;color:#c4c4c4;">XB</span>
<svg style="left:712px;top:1120px;" width="30" height="30" viewBox="0 0 30 30"><circle cx="15" cy="15" r="13" fill="none" stroke="#d4d4d4" stroke-width="2.200"/><path d="M23.500 6.500 L17.500 17.500 L12.500 12.500 Z" fill="none" stroke="#d4d4d4" stroke-width="2"/><path d="M6.500 23.500 L12.500 12.500 L17.500 17.500 Z" fill="#d4d4d4"/></svg>
<div style="left:0px;top:1164px;width:2037px;height:53px;background:#141414;"></div>
<div style="left:0px;top:1169px;width:174px;height:49px;background:#3c3c3c;border-radius:7px 7px 0 0;"></div>
<svg style="left:16px;top:1186px;" width="28" height="17" viewBox="0 0 28 17"><path d="M7.500 0.500 H20.500 Q27.500 0.500 27.500 8.500 Q27.500 16.500 22.500 16.500 Q20 16.500 18 13.500 H10 Q8 16.500 5.500 16.500 Q0.500 16.500 0.500 8.500 Q0.500 0.500 7.500 0.500 Z" fill="#c4c4c4"/><path d="M5 8 H11 M8 5 V11" stroke="#3c3c3c" stroke-width="2.200"/><circle cx="18.500" cy="9.500" r="1.700" fill="#3c3c3c"/><circle cx="22.500" cy="6.500" r="1.700" fill="#3c3c3c"/></svg>
<span style="left:50px;top:1179px;font-size:25px;line-height:30px;color:#c4c4c4;letter-spacing:-0.27px;">Game</span>
<svg style="left:194px;top:1183px;" width="24" height="24" viewBox="0 0 24 24"><rect x="5.800" y="1.600" width="12.400" height="20.800" rx="2.200" fill="none" stroke="#c4c4c4" stroke-width="2.600"/><rect x="5.800" y="1.600" width="12.400" height="4" fill="#c4c4c4"/><rect x="5.800" y="16.500" width="12.400" height="5.500" fill="#c4c4c4"/><circle cx="12" cy="19.300" r="1.500" fill="#141414"/><path d="M2.300 6 Q0.800 12 2.300 18 M21.700 6 Q23.200 12 21.700 18" fill="none" stroke="#c4c4c4" stroke-width="2.600"/></svg>
<span style="left:226px;top:1179px;font-size:25px;line-height:30px;color:#c4c4c4;letter-spacing:0.16px;">Simulator</span>
<svg style="left:411px;top:1182px;" width="24" height="24" viewBox="0 0 24 24"><circle cx="12" cy="12" r="11.500" fill="#c4c4c4"/><path d="M12 4 V13 H19" fill="none" stroke="#141414" stroke-width="2.600"/></svg>
<span style="left:443px;top:1179px;font-size:25px;line-height:30px;color:#c4c4c4;letter-spacing:0.2px;">Animation</span>
<svg style="left:637px;top:1183px;" width="22" height="20" viewBox="0 0 22 20"><g fill="none" stroke="#c4c4c4" stroke-width="2.600"><path d="M1 2 Q7 3 9 10 Q7 17 1 18"/><path d="M9 10 H19"/></g><path d="M14 4.500 L21 10 L14 15.500 Z" fill="#c4c4c4"/></svg>
<span style="left:666px;top:1179px;font-size:25px;line-height:30px;color:#c4c4c4;letter-spacing:0.24px;">Animator</span>
<svg style="left:2007px;top:1181.5px;" width="8" height="23" viewBox="0 0 8 23"><circle cx="4" cy="4" r="2.95" fill="#c4c4c4"/><circle cx="4" cy="11.5" r="2.95" fill="#c4c4c4"/><circle cx="4" cy="19" r="2.95" fill="#c4c4c4"/></svg>
<div style="left:0px;top:1217px;width:2037px;height:41px;background:#3c3c3c;"></div>
<div style="left:0px;top:1256.5px;width:2037px;height:2px;background:#212121;"></div>
<div style="left:0px;top:1217px;width:2px;height:40px;background:#252525;"></div>
<span style="left:8px;top:1222px;font-size:25px;line-height:30px;color:#c4c4c4;letter-spacing:-0.52px;">Game</span>
<svg style="left:157px;top:1234px;" width="14" height="8" viewBox="0 0 14 8"><path d="M0 0H14 L7 8 Z" fill="#c4c4c4"/></svg>
<div style="left:180px;top:1218px;width:2px;height:38px;background:#2a2a2a;"></div>
<span style="left:200px;top:1222px;font-size:25px;line-height:30px;color:#c4c4c4;letter-spacing:-0.31px;">Display 1</span>
<svg style="left:329px;top:1234px;" width="14" height="8" viewBox="0 0 14 8"><path d="M0 0H14 L7 8 Z" fill="#c4c4c4"/></svg>
<div style="left:352px;top:1218px;width:2px;height:38px;background:#2a2a2a;"></div>
<span style="left:359px;top:1222px;font-size:25px;line-height:30px;color:#c4c4c4;letter-spacing:-0.15px;">iPhone 12 Pro Max</span>
<span style="left:589px;top:1222px;font-size:25px;line-height:30px;color:#c4c4c4;letter-spacing:0.1px;">2778</span>
<svg style="left:649px;top:1234px;" width="14" height="8" viewBox="0 0 14 8"><path d="M0 0H14 L7 8 Z" fill="#c4c4c4"/></svg>
<div style="left:672px;top:1218px;width:2px;height:38px;background:#2a2a2a;"></div>
<span style="left:686px;top:1223px;font-size:25px;line-height:30px;color:#c4c4c4;letter-spacing:-0.11px;">Scale</span>
<div style="left:770px;top:1237.5px;width:289px;height:3px;background:#5e5e5e;"></div>
<svg style="left:760px;top:1228px;" width="20" height="20" viewBox="0 0 20 20"><circle cx="10" cy="10" r="9.600" fill="#999999"/></svg>
<span style="left:1072px;top:1223px;font-size:25px;line-height:30px;color:#c4c4c4;letter-spacing:-0.43px;">0.31x</span>
<div style="left:1297px;top:1218px;width:2px;height:38px;background:#2a2a2a;"></div>
<span style="left:1306px;top:1222px;font-size:25px;line-height:30px;color:#c4c4c4;letter-spacing:-0.12px;">Play Focused</span>
<svg style="left:1495px;top:1234px;" width="14" height="8" viewBox="0 0 14 8"><path d="M0 0H14 L7 8 Z" fill="#c4c4c4"/></svg>
<div style="left:1518px;top:1218px;width:2px;height:38px;background:#2a2a2a;"></div>
<svg style="left:1531px;top:1223px;" width="28" height="29" viewBox="0 0 28 29"><path d="M14 4 Q23.500 4 23.500 16.500 Q23.500 28.500 14 28.500 Q4.500 28.500 4.500 16.500 Q4.500 4 14 4 Z" fill="#c0c0c0"/><g stroke="#c0c0c0" stroke-width="2.400" fill="none" stroke-linecap="round"><path d="M10 5 Q9.500 2 6.500 1.200 M18 5 Q18.500 2 21.500 1.200"/><path d="M6 12 Q3.500 11.500 2.500 7 M22 12 Q24.500 11.500 25.500 7 M5 17.500 Q2 17 1 19.500 M23 17.500 Q26 17 27 19.500 M6 23 Q3 23.500 2.500 27.500 M22 23 Q25 23.500 25.500 27.500"/></g></svg>
<div style="left:1570px;top:1218px;width:2px;height:38px;background:#2a2a2a;"></div>
<div style="left:1712px;top:1218px;width:2px;height:38px;background:#2a2a2a;"></div>
<svg style="left:1727px;top:1227px;" width="26" height="20" viewBox="0 0 26 20"><path d="M0 6 H4 V14 H0 Z M6 5 L13 0 V20 L6 15 Z" fill="#c4c4c4"/><g fill="none" stroke="#c4c4c4" stroke-width="2"><path d="M16.500 6 Q19 10 16.500 14"/><path d="M20.500 3 Q25.500 10 20.500 17"/></g></svg>
<div style="left:1764px;top:1218px;width:2px;height:38px;background:#2a2a2a;"></div>
<svg style="left:1777px;top:1228px;" width="28" height="19" viewBox="0 0 28 19"><rect x="1" y="1" width="26" height="17" fill="none" stroke="#c4c4c4" stroke-width="2"/><g fill="#c4c4c4"><rect x="4" y="4.500" width="3.500" height="3"/><rect x="9.500" y="4.500" width="3.500" height="3"/><rect x="15" y="4.500" width="3.500" height="3"/><rect x="20.500" y="4.500" width="3.500" height="3"/><rect x="4" y="9" width="3.500" height="3"/><rect x="9.500" y="9" width="3.500" height="3"/><rect x="15" y="9" width="3.500" height="3"/><rect x="20.500" y="9" width="3.500" height="3"/><rect x="6" y="13.500" width="16" height="2.500"/></g></svg>
<div style="left:1816px;top:1218px;width:2px;height:38px;background:#2a2a2a;"></div>
<span style="left:1828px;top:1222px;font-size:25px;line-height:30px;color:#c4c4c4;letter-spacing:0.21px;">Stats</span>
<div style="left:1896px;top:1218px;width:2px;height:38px;background:#2a2a2a;"></div>
<span style="left:1904px;top:1222px;font-size:25px;line-height:30px;color:#c4c4c4;letter-spacing:0.04px;">Gizmos</span>
<div style="left:2000px;top:1226px;width:1.5px;height:22px;background:#2a2a2a;"></div>
<svg style="left:2011px;top:1234px;" width="14" height="8" viewBox="0 0 14 8"><path d="M0 0H14 L7 8 Z" fill="#c4c4c4"/></svg>
<div style="left:0px;top:1258px;width:2037px;height:858px;background:#282828;box-shadow:inset 0 14px 22px -6px rgba(0,0,0,0.52), inset 0 0 16px rgba(0,0,0,0.28);"></div>
<div style="left:820px;top:1258px;width:396px;height:858px;background:#000000;"></div>
<div style="left:0px;top:2116px;width:3456px;height:44px;background:#141414;"></div>
<div style="left:2037px;top:72px;width:4px;height:2044px;background:#131313;"></div>
<div style="left:2754px;top:72px;width:4px;height:2044px;background:#131313;"></div>
<div style="left:2041px;top:72px;width:713px;height:48px;background:#141414;"></div>
<div style="left:2041px;top:72px;width:218px;height:49px;background:#3c3c3c;border-radius:7px 7px 0 0;border-top:4px solid #3d5e86;"></div>
<svg style="left:2062px;top:88px;" width="22" height="18" viewBox="0 0 22 18"><g fill="#c4c4c4"><circle cx="1.900" cy="2" r="2"/><circle cx="5.900" cy="7.900" r="2"/><circle cx="5.900" cy="13.900" r="2"/><rect x="5.300" y="1" width="15.600" height="2"/><rect x="9.200" y="6.900" width="11.700" height="2"/><rect x="9.200" y="12.900" width="11.700" height="2"/></g></svg>
<span style="left:2093px;top:81.5px;font-size:25px;line-height:30px;color:#c4c4c4;letter-spacing:0.23px;">Hierarchy</span>
<svg style="left:2282px;top:85px;" width="20" height="22" viewBox="0 0 20 22"><rect x="0" y="0" width="20" height="22" rx="2" fill="#c4c4c4"/><g stroke="#141414" stroke-width="2"><path d="M3 5 H17 M3 9.300 H17 M3 13.600 H14 M3 17.900 H17"/></g></svg>
<span style="left:2312px;top:81.5px;font-size:25px;line-height:30px;color:#c4c4c4;letter-spacing:0.18px;">Console</span>
<svg style="left:2685.5px;top:86.5px;" width="17" height="20" viewBox="0 0 17 20"><rect x="1.1" y="10.1" width="14.3" height="8.300" fill="none" stroke="#c4c4c4" stroke-width="2.100"/><path d="M12.300 10 V6 Q12.300 1.100 8 1.100 Q4.500 1.100 3.300 4" fill="none" stroke="#c4c4c4" stroke-width="2.100"/></svg>
<svg style="left:2724px;top:85px;" width="8" height="23" viewBox="0 0 8 23"><circle cx="4" cy="4" r="2.95" fill="#c4c4c4"/><circle cx="4" cy="11.5" r="2.95" fill="#c4c4c4"/><circle cx="4" cy="19" r="2.95" fill="#c4c4c4"/></svg>
<div style="left:2041px;top:120px;width:713px;height:40px;background:#3c3c3c;"></div>
<svg style="left:2055px;top:128px;" width="24" height="24" viewBox="0 0 24 24"><path d="M12 0 V24 M0 12 H24" stroke="#c4c4c4" stroke-width="3.600"/></svg>
<svg style="left:2088px;top:136.25px;" width="14" height="8.5" viewBox="0 0 14 8.5"><path d="M0 0H14 L7 8.5 Z" fill="#c4c4c4"/></svg>
<div style="left:2127.5px;top:124.5px;width:618.5px;height:31px;background:#2a2a2a;border:2px solid #1e1e1e;border-radius:8px;"></div>
<svg style="left:2137px;top:131px;" width="18" height="18" viewBox="0 0 18 18"><circle cx="6" cy="6" r="4.600" fill="none" stroke="#c4c4c4" stroke-width="2.200"/><path d="M9.500 9.500 L14 14" stroke="#c4c4c4" stroke-width="2.800" stroke-linecap="round"/><path d="M11.500 5 H17.500 L14.500 8.500 Z" fill="#c4c4c4"/></svg>
<span style="left:2165px;top:126px;font-size:25px;line-height:30px;color:#7c7c7c;letter-spacing:-0.93px;">All</span>
<div style="left:2709px;top:126.5px;width:1.5px;height:27px;background:#222;"></div>
<div style="left:2710.5px;top:126.5px;width:33.5px;height:27px;background:#333333;border-radius:0 6px 6px 0;"></div>
<svg style="left:2717px;top:129px;" width="24" height="24" viewBox="0 0 24 24"><g fill="none" stroke="#c4c4c4" stroke-width="2"><path d="M4.500 9 V1 H23 V19 H14"/><rect x="1" y="13.500" width="8.500" height="8.500"/><path d="M9 15 L18 6 M11.500 6 H18 V12.500"/></g></svg>
<div style="left:2041px;top:160px;width:713px;height:1005px;background:#383838;"></div>
<div style="left:2041px;top:160px;width:64px;height:1005px;background:#313131;"></div>
<div style="left:2041px;top:160px;width:713px;height:33px;background:#2a2a2a;"></div>
<div style="left:2041px;top:192px;width:713px;height:2px;background:#3f3f3f;"></div>
<svg style="left:2109px;top:171px;" width="18" height="15" viewBox="0 0 18 15"><path d="M0 0 H18 L9 15 Z" fill="#6c6c6c"/></svg>
<svg style="left:2136.5px;top:163.5px;" width="25" height="29" viewBox="0 0 100 108"><path d="M50 1 L97 27 V81 L50 107 L3 81 V27 Z" fill="#ffffff"/><path d="M50 27 L66 36 L50 46 L34 36 Z M50 1 V27" fill="#2a2a2a" stroke="#2a2a2a" stroke-width="7"/><path d="M22 52 L40 62 V82 L22 72 Z M22 72 L3 81" fill="#2a2a2a" stroke="#2a2a2a" stroke-width="5"/><path d="M78 52 L60 62 V82 L78 72 Z M78 72 L97 81" fill="#2a2a2a" stroke="#2a2a2a" stroke-width="5"/></svg>
<span style="left:2171px;top:162px;font-size:24px;line-height:30px;color:#dcdcdc;font-weight:bold;letter-spacing:0.14px;">Anchor to Image</span>
<svg style="left:2726px;top:166px;" width="8" height="23" viewBox="0 0 8 23"><circle cx="4" cy="4" r="2.95" fill="#c4c4c4"/><circle cx="4" cy="11.5" r="2.95" fill="#c4c4c4"/><circle cx="4" cy="19" r="2.95" fill="#c4c4c4"/></svg>
<div style="left:2041px;top:290px;width:713px;height:32px;background:#3b5d86;"></div>
<div style="left:2041px;top:290px;width:64px;height:32px;background:#3b537c;"></div>
<svg style="left:2162px;top:197px;" width="27" height="27" viewBox="0 0 100 104"><g fill="none" stroke="#c8c8c8" stroke-width="7.41" stroke-linejoin="round"><path d="M50 4 L92 27 V77 L50 100 L8 77 V27 Z"/><path d="M8 27 L50 50 L92 27 M50 50 V100"/></g></svg>
<span style="left:2197px;top:193.5px;font-size:25px;line-height:30px;color:#c8c8c8;letter-spacing:0.31px;">Directional Light</span>
<svg style="left:2162px;top:229px;" width="27" height="27" viewBox="0 0 100 104"><g fill="none" stroke="#c8c8c8" stroke-width="7.41" stroke-linejoin="round"><path d="M50 4 L92 27 V77 L50 100 L8 77 V27 Z"/><path d="M8 27 L50 50 L92 27 M50 50 V100"/></g></svg>
<span style="left:2197px;top:225.5px;font-size:25px;line-height:30px;color:#c8c8c8;">Global Volume</span>
<svg style="left:2162px;top:261px;" width="27" height="27" viewBox="0 0 100 104"><g fill="none" stroke="#c8c8c8" stroke-width="7.41" stroke-linejoin="round"><path d="M50 4 L92 27 V77 L50 100 L8 77 V27 Z"/><path d="M8 27 L50 50 L92 27 M50 50 V100"/></g></svg>
<span style="left:2197px;top:257.5px;font-size:25px;line-height:30px;color:#c8c8c8;letter-spacing:-0.41px;">AR Session</span>
<svg style="left:2162px;top:293px;" width="27" height="27" viewBox="0 0 100 104"><g fill="none" stroke="#f0f0f0" stroke-width="7.41" stroke-linejoin="round"><path d="M50 4 L92 27 V77 L50 100 L8 77 V27 Z"/><path d="M8 27 L50 50 L92 27 M50 50 V100"/></g></svg>
<span style="left:2197px;top:289.5px;font-size:25px;line-height:30px;color:#ffffff;letter-spacing:-0.43px;">XR Origin</span>
<svg style="left:2162px;top:325px;" width="27" height="27" viewBox="0 0 100 104"><g fill="none" stroke="#c8c8c8" stroke-width="7.41" stroke-linejoin="round"><path d="M50 4 L92 27 V77 L50 100 L8 77 V27 Z"/><path d="M8 27 L50 50 L92 27 M50 50 V100"/></g></svg>
<span style="left:2197px;top:321.5px;font-size:25px;line-height:30px;color:#c8c8c8;letter-spacing:0.11px;">EventSystem</span>
<svg style="left:2139px;top:297px;" width="15" height="18" viewBox="0 0 15 18"><path d="M0 0 V18 L15 9 Z" fill="#7f92ab"/></svg>
<div style="left:2041px;top:1165px;width:713px;height:52px;background:#141414;"></div>
<div style="left:2041px;top:1169px;width:190px;height:49px;background:#3c3c3c;border-radius:7px 7px 0 0;"></div>
<svg style="left:2060.5px;top:1184px;" width="24.5" height="20" viewBox="0 0 24 20"><path d="M1 2.5 Q1 0.5 3 0.5 H8.5 L11 3.5 H21.5 Q23.5 3.5 23.5 5.5 V17.5 Q23.5 19.5 21.5 19.5 H3 Q1 19.5 1 17.5 Z" fill="#c4c4c4"/></svg>
<span style="left:2093px;top:1179px;font-size:25px;line-height:30px;color:#c4c4c4;letter-spacing:0.31px;">Project</span>
<svg style="left:2685px;top:1183.5px;" width="17" height="20" viewBox="0 0 17 20"><rect x="1.1" y="10.1" width="14.3" height="8.300" fill="none" stroke="#c4c4c4" stroke-width="2.100"/><path d="M12.300 10 V6 Q12.300 1.100 8 1.100 Q4.500 1.100 3.300 4" fill="none" stroke="#c4c4c4" stroke-width="2.100"/></svg>
<svg style="left:2724px;top:1181.5px;" width="8" height="23" viewBox="0 0 8 23"><circle cx="4" cy="4" r="2.95" fill="#c4c4c4"/><circle cx="4" cy="11.5" r="2.95" fill="#c4c4c4"/><circle cx="4" cy="19" r="2.95" fill="#c4c4c4"/></svg>
<div style="left:2041px;top:1217px;width:713px;height:41px;background:#3c3c3c;"></div>
<svg style="left:2055px;top:1225.5px;" width="24" height="24" viewBox="0 0 24 24"><path d="M12 0 V24 M0 12 H24" stroke="#c4c4c4" stroke-width="3.600"/></svg>
<svg style="left:2088px;top:1233.25px;" width="14" height="8.5" viewBox="0 0 14 8.5"><path d="M0 0H14 L7 8.5 Z" fill="#c4c4c4"/></svg>
<div style="left:2132px;top:1221.5px;width:374.5px;height:30.5px;background:#2a2a2a;border:2px solid #1e1e1e;border-radius:8px;"></div>
<svg style="left:2141px;top:1229px;" width="15" height="15" viewBox="0 0 15 15"><circle cx="5.500" cy="5.500" r="4.200" fill="none" stroke="#c4c4c4" stroke-width="2.200"/><path d="M9 9 L13.500 13.500" stroke="#c4c4c4" stroke-width="2.800" stroke-linecap="round"/></svg>
<div style="left:2470.5px;top:1223.5px;width:1.5px;height:27px;background:#222;"></div>
<div style="left:2472px;top:1223.5px;width:32.5px;height:26.5px;background:#333333;border-radius:0 6px 6px 0;"></div>
<svg style="left:2476px;top:1225px;" width="24" height="24" viewBox="0 0 24 24"><g fill="none" stroke="#c4c4c4" stroke-width="2"><path d="M4.500 9 V1 H23 V19 H14"/><rect x="1" y="13.500" width="8.500" height="8.500"/><path d="M9 15 L18 6 M11.500 6 H18 V12.500"/></g></svg>
<div style="left:2511px;top:1218px;width:2px;height:38px;background:#2c2c2c;"></div>
<div style="left:2563px;top:1218px;width:2px;height:38px;background:#2c2c2c;"></div>
<div style="left:2615px;top:1218px;width:2px;height:38px;background:#2c2c2c;"></div>
<div style="left:2667px;top:1218px;width:2px;height:38px;background:#2c2c2c;"></div>
<svg style="left:2525px;top:1223px;" width="26" height="28" viewBox="0 0 26 28"><rect x="3" y="0" width="12" height="11" fill="#c4c4c4"/><circle cx="7.500" cy="20.500" r="7.500" fill="#c4c4c4"/><path d="M19 9 L26 21 H13 Z" fill="#c4c4c4" stroke="#3c3c3c" stroke-width="1.500"/></svg>
<svg style="left:2578px;top:1227px;" width="22" height="22" viewBox="0 0 22 22"><path d="M8.500 0.500 L20.500 2 L21.500 9.500 L9.500 21.500 L0.500 12.500 Z" fill="#c4c4c4" transform="rotate(6 11 11)"/><circle cx="16.500" cy="6" r="2" fill="#3c3c3c"/></svg>
<svg style="left:2628px;top:1224px;" width="27" height="27" viewBox="0 0 27 27"><path d="M8 0.500 H19 L26.500 8 V19 L19 26.500 H8 L0.500 19 V8 Z" fill="#c4c4c4"/><rect x="11.700" y="5" width="3.600" height="11" fill="#3c3c3c"/><rect x="11.700" y="18.500" width="3.600" height="3.600" fill="#3c3c3c"/></svg>
<svg style="left:2681px;top:1228px;" width="28" height="19" viewBox="0 0 28 19"><path d="M1 9.500 Q14 -5 27 9.500 Q14 24 1 9.500 Z" fill="none" stroke="#6a6a6a" stroke-width="2"/><circle cx="14" cy="8.500" r="5" fill="#6a6a6a"/></svg>
<span style="left:2713px;top:1223px;font-size:25px;line-height:30px;color:#c4c4c4;letter-spacing:0.6px;">30</span>
<div style="left:2041px;top:1258px;width:713px;height:816px;background:#383838;overflow:hidden;">
<svg style="left:94.25px;top:-12.5px;" width="15.5" height="18" viewBox="0 0 15.5 18"><path d="M0 0V18 L15.5 9 Z" fill="#6c6c6c"/></svg>
<svg style="left:120px;top:-13.5px;" width="24" height="20" viewBox="0 0 24 20"><path d="M1 2.5 Q1 0.5 3 0.5 H8.5 L11 3.5 H21.5 Q23.5 3.5 23.5 5.5 V17.5 Q23.5 19.5 21.5 19.5 H3 Q1 19.5 1 17.5 Z" fill="#c2c2c2"/></svg>
<span style="left:152px;top:-19.5px;font-size:25px;line-height:30px;color:#c4c4c4;letter-spacing:0.23px;">Production Equipment</span>
<svg style="left:94.25px;top:19.5px;" width="15.5" height="18" viewBox="0 0 15.5 18"><path d="M0 0V18 L15.5 9 Z" fill="#6c6c6c"/></svg>
<svg style="left:120px;top:18.5px;" width="24" height="20" viewBox="0 0 24 20"><path d="M1 2.5 Q1 0.5 3 0.5 H8.5 L11 3.5 H21.5 Q23.5 3.5 23.5 5.5 V17.5 Q23.5 19.5 21.5 19.5 H3 Q1 19.5 1 17.5 Z" fill="#c2c2c2"/></svg>
<span style="left:152px;top:12.5px;font-size:25px;line-height:30px;color:#c4c4c4;letter-spacing:0.13px;">Robots</span>
<svg style="left:94.25px;top:51.5px;" width="15.5" height="18" viewBox="0 0 15.5 18"><path d="M0 0V18 L15.5 9 Z" fill="#6c6c6c"/></svg>
<svg style="left:120px;top:50.5px;" width="24" height="20" viewBox="0 0 24 20"><path d="M1 2.5 Q1 0.5 3 0.5 H8.5 L11 3.5 H21.5 Q23.5 3.5 23.5 5.5 V17.5 Q23.5 19.5 21.5 19.5 H3 Q1 19.5 1 17.5 Z" fill="#c2c2c2"/></svg>
<span style="left:152px;top:44.5px;font-size:25px;line-height:30px;color:#c4c4c4;letter-spacing:0.47px;">Tire</span>
<svg style="left:94.25px;top:83.5px;" width="15.5" height="18" viewBox="0 0 15.5 18"><path d="M0 0V18 L15.5 9 Z" fill="#6c6c6c"/></svg>
<svg style="left:120px;top:82.5px;" width="24" height="20" viewBox="0 0 24 20"><path d="M1 2.5 Q1 0.5 3 0.5 H8.5 L11 3.5 H21.5 Q23.5 3.5 23.5 5.5 V17.5 Q23.5 19.5 21.5 19.5 H3 Q1 19.5 1 17.5 Z" fill="#c2c2c2"/></svg>
<span style="left:152px;top:76.5px;font-size:25px;line-height:30px;color:#c4c4c4;letter-spacing:-0.1px;">V8 Engine</span>
<svg style="left:94.25px;top:115.5px;" width="15.5" height="18" viewBox="0 0 15.5 18"><path d="M0 0V18 L15.5 9 Z" fill="#6c6c6c"/></svg>
<svg style="left:120px;top:114.5px;" width="24" height="20" viewBox="0 0 24 20"><path d="M1 2.5 Q1 0.5 3 0.5 H8.5 L11 3.5 H21.5 Q23.5 3.5 23.5 5.5 V17.5 Q23.5 19.5 21.5 19.5 H3 Q1 19.5 1 17.5 Z" fill="#c2c2c2"/></svg>
<span style="left:152px;top:108.5px;font-size:25px;line-height:30px;color:#c4c4c4;letter-spacing:-1.37px;">VR</span>
<svg style="left:94.25px;top:147.5px;" width="15.5" height="18" viewBox="0 0 15.5 18"><path d="M0 0V18 L15.5 9 Z" fill="#6c6c6c"/></svg>
<svg style="left:120px;top:146.5px;" width="24" height="20" viewBox="0 0 24 20"><path d="M1 2.5 Q1 0.5 3 0.5 H8.5 L11 3.5 H21.5 Q23.5 3.5 23.5 5.5 V17.5 Q23.5 19.5 21.5 19.5 H3 Q1 19.5 1 17.5 Z" fill="#c2c2c2"/></svg>
<span style="left:152px;top:140.5px;font-size:25px;line-height:30px;color:#c4c4c4;letter-spacing:0.05px;">Wrench</span>
<svg style="left:94.25px;top:179.5px;" width="15.5" height="18" viewBox="0 0 15.5 18"><path d="M0 0V18 L15.5 9 Z" fill="#6c6c6c"/></svg>
<svg style="left:120px;top:178.5px;" width="24" height="20" viewBox="0 0 24 20"><path d="M1 2.5 Q1 0.5 3 0.5 H8.5 L11 3.5 H21.5 Q23.5 3.5 23.5 5.5 V17.5 Q23.5 19.5 21.5 19.5 H3 Q1 19.5 1 17.5 Z" fill="#c2c2c2"/></svg>
<span style="left:152px;top:172.5px;font-size:25px;line-height:30px;color:#c4c4c4;letter-spacing:-0.16px;">XR Headsets</span>
<svg style="left:64px;top:213px;" width="18.5" height="15.5" viewBox="0 0 18.5 15.5"><path d="M0 0 H18.500 L9.250 15.500 Z" fill="#6c6c6c"/></svg>
<svg style="left:92px;top:210.5px;" width="27" height="20" viewBox="0 0 27 20"><path d="M1 17 V2.5 Q1 1 2.5 1 H8 L10.5 4 H19.5 Q21 4 21 5.5 V7.5" fill="none" stroke="#c2c2c2" stroke-width="2"/><path d="M6.5 8.5 H26.5 L22 19.5 H1.5 Z" fill="#c2c2c2"/></svg>
<span style="left:124px;top:204.5px;font-size:25px;line-height:30px;color:#c4c4c4;letter-spacing:0.37px;">Scripts</span>
<svg style="left:94.25px;top:243.5px;" width="15.5" height="18" viewBox="0 0 15.5 18"><path d="M0 0V18 L15.5 9 Z" fill="#6c6c6c"/></svg>
<svg style="left:120px;top:242.5px;" width="24" height="20" viewBox="0 0 24 20"><path d="M1 2.5 Q1 0.5 3 0.5 H8.5 L11 3.5 H21.5 Q23.5 3.5 23.5 5.5 V17.5 Q23.5 19.5 21.5 19.5 H3 Q1 19.5 1 17.5 Z" fill="#c2c2c2"/></svg>
<span style="left:152px;top:236.5px;font-size:25px;line-height:30px;color:#c4c4c4;letter-spacing:-0.21px;">AGV Omniwheel</span>
<svg style="left:92px;top:277px;" width="18.5" height="15.5" viewBox="0 0 18.5 15.5"><path d="M0 0 H18.500 L9.250 15.500 Z" fill="#6c6c6c"/></svg>
<svg style="left:120px;top:274.5px;" width="27" height="20" viewBox="0 0 27 20"><path d="M1 17 V2.5 Q1 1 2.5 1 H8 L10.5 4 H19.5 Q21 4 21 5.5 V7.5" fill="none" stroke="#c2c2c2" stroke-width="2"/><path d="M6.5 8.5 H26.5 L22 19.5 H1.5 Z" fill="#c2c2c2"/></svg>
<span style="left:152px;top:268.5px;font-size:25px;line-height:30px;color:#c4c4c4;letter-spacing:-0.14px;">AR Foundation</span>
<svg style="left:120px;top:309px;" width="18.5" height="15.5" viewBox="0 0 18.5 15.5"><path d="M0 0 H18.500 L9.250 15.500 Z" fill="#6c6c6c"/></svg>
<svg style="left:148px;top:306.5px;" width="27" height="20" viewBox="0 0 27 20"><path d="M1 17 V2.5 Q1 1 2.5 1 H8 L10.5 4 H19.5 Q21 4 21 5.5 V7.5" fill="none" stroke="#c2c2c2" stroke-width="2"/><path d="M6.5 8.5 H26.5 L22 19.5 H1.5 Z" fill="#c2c2c2"/></svg>
<span style="left:180px;top:300.5px;font-size:25px;line-height:30px;color:#c4c4c4;letter-spacing:0.33px;">Anchors</span>
<svg style="left:176px;top:335px;" width="24" height="28" viewBox="0 0 24 28"><path d="M1.5 0 H17 L24 7 V26.5 Q24 28 22.5 28 H1.5 Q0 28 0 26.5 V1.5 Q0 0 1.5 0 Z" fill="#eeeeee"/><path d="M17 0 L24 7 H17 Z" fill="#bdbdbd"/><text x="11.5" y="22.5" font-family="Liberation Sans, sans-serif" font-weight="bold" font-size="22" fill="#2c702e" stroke="#2c702e" stroke-width="0.500" text-anchor="middle">#</text></svg>
<span style="left:208px;top:332.5px;font-size:25px;line-height:30px;color:#c4c4c4;letter-spacing:0.16px;">AnchorPlacer</span>
<svg style="left:176px;top:367px;" width="24" height="28" viewBox="0 0 24 28"><path d="M1.5 0 H17 L24 7 V26.5 Q24 28 22.5 28 H1.5 Q0 28 0 26.5 V1.5 Q0 0 1.5 0 Z" fill="#eeeeee"/><path d="M17 0 L24 7 H17 Z" fill="#bdbdbd"/><text x="11.5" y="22.5" font-family="Liberation Sans, sans-serif" font-weight="bold" font-size="22" fill="#2c702e" stroke="#2c702e" stroke-width="0.500" text-anchor="middle">#</text></svg>
<span style="left:208px;top:364.5px;font-size:25px;line-height:30px;color:#c4c4c4;letter-spacing:0.22px;">TrackedImageAnchor</span>
<svg style="left:122.25px;top:403.5px;" width="15.5" height="18" viewBox="0 0 15.5 18"><path d="M0 0V18 L15.5 9 Z" fill="#6c6c6c"/></svg>
<svg style="left:148px;top:402.5px;" width="24" height="20" viewBox="0 0 24 20"><path d="M1 2.5 Q1 0.5 3 0.5 H8.5 L11 3.5 H21.5 Q23.5 3.5 23.5 5.5 V17.5 Q23.5 19.5 21.5 19.5 H3 Q1 19.5 1 17.5 Z" fill="#c2c2c2"/></svg>
<span style="left:180px;top:396.5px;font-size:25px;line-height:30px;color:#c4c4c4;letter-spacing:0.22px;">Image Tracking</span>
<svg style="left:122.25px;top:435.5px;" width="15.5" height="18" viewBox="0 0 15.5 18"><path d="M0 0V18 L15.5 9 Z" fill="#6c6c6c"/></svg>
<svg style="left:148px;top:434.5px;" width="24" height="20" viewBox="0 0 24 20"><path d="M1 2.5 Q1 0.5 3 0.5 H8.5 L11 3.5 H21.5 Q23.5 3.5 23.5 5.5 V17.5 Q23.5 19.5 21.5 19.5 H3 Q1 19.5 1 17.5 Z" fill="#c2c2c2"/></svg>
<span style="left:180px;top:428.5px;font-size:25px;line-height:30px;color:#c4c4c4;letter-spacing:0.3px;">World Understanding</span>
<svg style="left:94.25px;top:467.5px;" width="15.5" height="18" viewBox="0 0 15.5 18"><path d="M0 0V18 L15.5 9 Z" fill="#6c6c6c"/></svg>
<svg style="left:120px;top:466.5px;" width="24" height="20" viewBox="0 0 24 20"><path d="M1 2.5 Q1 0.5 3 0.5 H8.5 L11 3.5 H21.5 Q23.5 3.5 23.5 5.5 V17.5 Q23.5 19.5 21.5 19.5 H3 Q1 19.5 1 17.5 Z" fill="#c2c2c2"/></svg>
<span style="left:152px;top:460.5px;font-size:25px;line-height:30px;color:#c4c4c4;letter-spacing:0.21px;">Audio</span>
<svg style="left:94.25px;top:499.5px;" width="15.5" height="18" viewBox="0 0 15.5 18"><path d="M0 0V18 L15.5 9 Z" fill="#6c6c6c"/></svg>
<svg style="left:120px;top:498.5px;" width="24" height="20" viewBox="0 0 24 20"><path d="M1 2.5 Q1 0.5 3 0.5 H8.5 L11 3.5 H21.5 Q23.5 3.5 23.5 5.5 V17.5 Q23.5 19.5 21.5 19.5 H3 Q1 19.5 1 17.5 Z" fill="#c2c2c2"/></svg>
<span style="left:152px;top:492.5px;font-size:25px;line-height:30px;color:#c4c4c4;letter-spacing:0.12px;">Caliper Set</span>
<svg style="left:94.25px;top:531.5px;" width="15.5" height="18" viewBox="0 0 15.5 18"><path d="M0 0V18 L15.5 9 Z" fill="#6c6c6c"/></svg>
<svg style="left:120px;top:530.5px;" width="24" height="20" viewBox="0 0 24 20"><path d="M1 2.5 Q1 0.5 3 0.5 H8.5 L11 3.5 H21.5 Q23.5 3.5 23.5 5.5 V17.5 Q23.5 19.5 21.5 19.5 H3 Q1 19.5 1 17.5 Z" fill="#c2c2c2"/></svg>
<span style="left:152px;top:524.5px;font-size:25px;line-height:30px;color:#c4c4c4;letter-spacing:0.07px;">CNC Machines</span>
<svg style="left:94.25px;top:563.5px;" width="15.5" height="18" viewBox="0 0 15.5 18"><path d="M0 0V18 L15.5 9 Z" fill="#6c6c6c"/></svg>
<svg style="left:120px;top:562.5px;" width="24" height="20" viewBox="0 0 24 20"><path d="M1 2.5 Q1 0.5 3 0.5 H8.5 L11 3.5 H21.5 Q23.5 3.5 23.5 5.5 V17.5 Q23.5 19.5 21.5 19.5 H3 Q1 19.5 1 17.5 Z" fill="#c2c2c2"/></svg>
<span style="left:152px;top:556.5px;font-size:25px;line-height:30px;color:#c4c4c4;letter-spacing:0.07px;">Displays</span>
<svg style="left:94.25px;top:595.5px;" width="15.5" height="18" viewBox="0 0 15.5 18"><path d="M0 0V18 L15.5 9 Z" fill="#6c6c6c"/></svg>
<svg style="left:120px;top:594.5px;" width="24" height="20" viewBox="0 0 24 20"><path d="M1 2.5 Q1 0.5 3 0.5 H8.5 L11 3.5 H21.5 Q23.5 3.5 23.5 5.5 V17.5 Q23.5 19.5 21.5 19.5 H3 Q1 19.5 1 17.5 Z" fill="#c2c2c2"/></svg>
<span style="left:152px;top:588.5px;font-size:25px;line-height:30px;color:#c4c4c4;letter-spacing:0.06px;">Doors</span>
<svg style="left:94.25px;top:627.5px;" width="15.5" height="18" viewBox="0 0 15.5 18"><path d="M0 0V18 L15.5 9 Z" fill="#6c6c6c"/></svg>
<svg style="left:120px;top:626.5px;" width="24" height="20" viewBox="0 0 24 20"><path d="M1 2.5 Q1 0.5 3 0.5 H8.5 L11 3.5 H21.5 Q23.5 3.5 23.5 5.5 V17.5 Q23.5 19.5 21.5 19.5 H3 Q1 19.5 1 17.5 Z" fill="#c2c2c2"/></svg>
<span style="left:152px;top:620.5px;font-size:25px;line-height:30px;color:#c4c4c4;letter-spacing:-0.02px;">Drone</span>
<svg style="left:94.25px;top:659.5px;" width="15.5" height="18" viewBox="0 0 15.5 18"><path d="M0 0V18 L15.5 9 Z" fill="#6c6c6c"/></svg>
<svg style="left:120px;top:658.5px;" width="24" height="20" viewBox="0 0 24 20"><path d="M1 2.5 Q1 0.5 3 0.5 H8.5 L11 3.5 H21.5 Q23.5 3.5 23.5 5.5 V17.5 Q23.5 19.5 21.5 19.5 H3 Q1 19.5 1 17.5 Z" fill="#c2c2c2"/></svg>
<span style="left:152px;top:652.5px;font-size:25px;line-height:30px;color:#c4c4c4;letter-spacing:0.38px;">Haptics</span>
<svg style="left:94.25px;top:691.5px;" width="15.5" height="18" viewBox="0 0 15.5 18"><path d="M0 0V18 L15.5 9 Z" fill="#6c6c6c"/></svg>
<svg style="left:120px;top:690.5px;" width="24" height="20" viewBox="0 0 24 20"><path d="M1 2.5 Q1 0.5 3 0.5 H8.5 L11 3.5 H21.5 Q23.5 3.5 23.5 5.5 V17.5 Q23.5 19.5 21.5 19.5 H3 Q1 19.5 1 17.5 Z" fill="#c2c2c2"/></svg>
<span style="left:152px;top:684.5px;font-size:25px;line-height:30px;color:#c4c4c4;letter-spacing:0.3px;">Inspection Drawer</span>
<svg style="left:94.25px;top:723.5px;" width="15.5" height="18" viewBox="0 0 15.5 18"><path d="M0 0V18 L15.5 9 Z" fill="#6c6c6c"/></svg>
<svg style="left:120px;top:722.5px;" width="24" height="20" viewBox="0 0 24 20"><path d="M1 2.5 Q1 0.5 3 0.5 H8.5 L11 3.5 H21.5 Q23.5 3.5 23.5 5.5 V17.5 Q23.5 19.5 21.5 19.5 H3 Q1 19.5 1 17.5 Z" fill="#c2c2c2"/></svg>
<span style="left:152px;top:716.5px;font-size:25px;line-height:30px;color:#c4c4c4;letter-spacing:0.26px;">Robotic Manipulators</span>
<svg style="left:94.25px;top:755.5px;" width="15.5" height="18" viewBox="0 0 15.5 18"><path d="M0 0V18 L15.5 9 Z" fill="#6c6c6c"/></svg>
<svg style="left:120px;top:754.5px;" width="24" height="20" viewBox="0 0 24 20"><path d="M1 2.5 Q1 0.5 3 0.5 H8.5 L11 3.5 H21.5 Q23.5 3.5 23.5 5.5 V17.5 Q23.5 19.5 21.5 19.5 H3 Q1 19.5 1 17.5 Z" fill="#c2c2c2"/></svg>
<span style="left:152px;top:748.5px;font-size:25px;line-height:30px;color:#c4c4c4;letter-spacing:0.13px;">Robots</span>
<svg style="left:94.25px;top:787.5px;" width="15.5" height="18" viewBox="0 0 15.5 18"><path d="M0 0V18 L15.5 9 Z" fill="#6c6c6c"/></svg>
<svg style="left:120px;top:786.5px;" width="24" height="20" viewBox="0 0 24 20"><path d="M1 2.5 Q1 0.5 3 0.5 H8.5 L11 3.5 H21.5 Q23.5 3.5 23.5 5.5 V17.5 Q23.5 19.5 21.5 19.5 H3 Q1 19.5 1 17.5 Z" fill="#c2c2c2"/></svg>
<span style="left:152px;top:780.5px;font-size:25px;line-height:30px;color:#c4c4c4;letter-spacing:-0.11px;">Scale</span>
<div style="left:688px;top:0px;width:25px;height:816px;background:#343434;"></div>
<div style="left:688px;top:0px;width:1.5px;height:816px;background:#303030;"></div>
<div style="left:691px;top:372px;width:20px;height:307px;background:#5f5f5f;border-radius:10px;"></div>
<svg style="left:694px;top:13px;" width="14" height="8" viewBox="0 0 14 8"><path d="M0 8 H14 L7 0 Z" fill="#c4c4c4"/></svg>
<svg style="left:694px;top:796px;" width="14" height="8" viewBox="0 0 14 8"><path d="M0 0 H14 L7 8 Z" fill="#c4c4c4"/></svg>
</div>
<div style="left:2041px;top:1256.5px;width:713px;height:1.5px;background:#2a2a2a;"></div>
<div style="left:2041px;top:2074px;width:713px;height:42px;background:#404040;"></div>
<div style="left:2758px;top:72px;width:698px;height:48px;background:#141414;"></div>
<div style="left:2758px;top:72px;width:216px;height:49px;background:#3c3c3c;border-radius:7px 7px 0 0;"></div>
<svg style="left:2780px;top:87px;" width="20" height="20" viewBox="0 0 20 20"><circle cx="10" cy="10" r="10" fill="#c4c4c4"/><rect x="8.400" y="8.400" width="3.200" height="7.600" fill="#3c3c3c"/><circle cx="10" cy="5.400" r="1.900" fill="#3c3c3c"/></svg>
<span style="left:2810px;top:81.5px;font-size:25px;line-height:30px;color:#c4c4c4;letter-spacing:0.52px;">Inspector</span>
<svg style="left:3385.5px;top:86.5px;" width="17" height="20" viewBox="0 0 17 20"><rect x="1.1" y="10.1" width="14.3" height="8.300" fill="none" stroke="#c4c4c4" stroke-width="2.100"/><path d="M12.300 10 V6 Q12.300 1.100 8 1.100 Q4.500 1.100 3.300 4" fill="none" stroke="#c4c4c4" stroke-width="2.100"/></svg>
<svg style="left:3424px;top:85px;" width="8" height="23" viewBox="0 0 8 23"><circle cx="4" cy="4" r="2.95" fill="#c4c4c4"/><circle cx="4" cy="11.5" r="2.95" fill="#c4c4c4"/><circle cx="4" cy="19" r="2.95" fill="#c4c4c4"/></svg>
<div style="left:2758px;top:120px;width:698px;height:1996px;background:#383838;overflow:hidden;">
<div style="left:0px;top:0px;width:698px;height:118px;background:#3c3c3c;"></div>
<svg style="left:15px;top:22px;" width="39" height="41" viewBox="0 0 100 104"><g fill="none" stroke="#c4c4c4" stroke-width="6.67" stroke-linejoin="round"><path d="M50 4 L92 27 V77 L50 100 L8 77 V27 Z"/><path d="M8 27 L50 50 L92 27 M50 50 V100"/></g></svg>
<svg style="left:53px;top:62.25px;" width="14" height="8.5" viewBox="0 0 14 8.5"><path d="M0 0H14 L7 8.5 Z" fill="#c4c4c4"/></svg>
<div style="left:90px;top:22px;width:28px;height:28px;background:#282828;border:2px solid #1b1b1b;border-radius:4.500px;"></div>
<svg style="left:90px;top:22px;" width="28" height="28" viewBox="0 0 28 28"><path d="M7 14.5 L12 19.5 L21.5 8.5" fill="none" stroke="#e8e8e8" stroke-width="3"/></svg>
<div style="left:130px;top:18.5px;width:407.5px;height:35px;background:#2a2a2a;border:2px solid #1e1e1e;border-radius:6px;"></div>
<span style="left:136px;top:22px;font-size:24px;line-height:30px;color:#e4e4e4;font-weight:bold;letter-spacing:-0.24px;">XR Origin</span>
<div style="left:544.5px;top:22px;width:28px;height:28px;background:#282828;border:2px solid #1b1b1b;border-radius:4.500px;"></div>
<span style="left:580px;top:21px;font-size:25px;line-height:30px;color:#c4c4c4;letter-spacing:0.41px;">Static</span>
<svg style="left:671px;top:32.75px;" width="14" height="8.5" viewBox="0 0 14 8.5"><path d="M0 0H14 L7 8.5 Z" fill="#c4c4c4"/></svg>
<span style="left:81px;top:68.5px;font-size:25px;line-height:30px;color:#c4c4c4;letter-spacing:0.06px;">Tag</span>
<div style="left:130px;top:67.5px;width:241px;height:33.5px;background:#515151;border:2px solid #2d2d2d;border-radius:5px;"></div>
<span style="left:137px;top:68px;font-size:25px;line-height:30px;color:#e0e0e0;letter-spacing:0.45px;">Untagged</span>
<svg style="left:345px;top:80.25px;" width="14" height="8.5" viewBox="0 0 14 8.5"><path d="M0 0H14 L7 8.5 Z" fill="#c4c4c4"/></svg>
<span style="left:398.5px;top:68.5px;font-size:25px;line-height:30px;color:#c4c4c4;letter-spacing:-0.11px;">Layer</span>
<div style="left:469px;top:67.5px;width:220px;height:33.5px;background:#515151;border:2px solid #2d2d2d;border-radius:5px;"></div>
<span style="left:476px;top:68px;font-size:25px;line-height:30px;color:#e0e0e0;letter-spacing:0.4px;">Default</span>
<svg style="left:663px;top:80.25px;" width="14" height="8.5" viewBox="0 0 14 8.5"><path d="M0 0H14 L7 8.5 Z" fill="#c4c4c4"/></svg>
<div style="left:0px;top:118px;width:698px;height:2px;background:#232323;"></div>
<div style="left:0px;top:120px;width:698px;height:40px;background:#3e3e3e;"></div>
<div style="left:0px;top:160px;width:698px;height:1.5px;background:#303030;"></div>
<svg style="left:11.5px;top:133px;" width="18" height="15" viewBox="0 0 18 15"><path d="M0 0 H18 L9 15 Z" fill="#6c6c6c"/></svg>
<svg style="left:43.5px;top:128px;" width="26" height="24" viewBox="0 0 26 24"><g stroke-width="4.600" stroke-linecap="round"><path d="M13 3 V12" stroke="#c9e86a"/><path d="M11.500 14.500 L3.500 19.500" stroke="#7cc4f0"/><path d="M14.500 14.500 L22.500 19.500" stroke="#e8744a"/></g></svg>
<span style="left:120px;top:125.5px;font-size:24px;line-height:30px;color:#dcdcdc;font-weight:bold;letter-spacing:0.29px;">Transform</span>
<svg style="left:582px;top:130px;" width="20" height="20" viewBox="0 0 20 20"><circle cx="10" cy="10" r="10" fill="#c4c4c4"/><text x="10" y="16" font-family="Liberation Sans, sans-serif" font-weight="bold" font-size="17" fill="#3c3c3c" text-anchor="middle">?</text></svg>
<svg style="left:622px;top:130px;" width="20" height="20" viewBox="0 0 20 20"><g stroke="#c4c4c4" stroke-width="2.2" fill="none"><path d="M0 6 H9 M15 6 H20 M12.5 1 V11"/><path d="M0 14.5 H4 M10 14.5 H20 M7.5 9.5 V19.5"/></g></svg>
<svg style="left:668px;top:128.5px;" width="8" height="23" viewBox="0 0 8 23"><circle cx="4" cy="4" r="2.95" fill="#c4c4c4"/><circle cx="4" cy="11.5" r="2.95" fill="#c4c4c4"/><circle cx="4" cy="19" r="2.95" fill="#c4c4c4"/></svg>
<span style="left:38px;top:173px;font-size:25px;line-height:30px;color:#c4c4c4;letter-spacing:0.19px;">Position</span>
<span style="left:281.5px;top:173px;font-size:25px;line-height:30px;color:#c4c4c4;">X</span>
<div style="left:311.5px;top:171px;width:100px;height:34px;background:#2a2a2a;border:2px solid #1e1e1e;border-radius:6px;"></div>
<span style="left:317.5px;top:173.5px;font-size:25px;line-height:30px;color:#d2d2d2;">0</span>
<span style="left:421px;top:173px;font-size:25px;line-height:30px;color:#c4c4c4;">Y</span>
<div style="left:450.5px;top:171px;width:100px;height:34px;background:#2a2a2a;border:2px solid #1e1e1e;border-radius:6px;"></div>
<span style="left:456.5px;top:173.5px;font-size:25px;line-height:30px;color:#d2d2d2;">0</span>
<span style="left:561px;top:173px;font-size:25px;line-height:30px;color:#c4c4c4;">Z</span>
<div style="left:589.5px;top:171px;width:100px;height:34px;background:#2a2a2a;border:2px solid #1e1e1e;border-radius:6px;"></div>
<span style="left:595.5px;top:173.5px;font-size:25px;line-height:30px;color:#d2d2d2;">0</span>
<span style="left:38px;top:213px;font-size:25px;line-height:30px;color:#c4c4c4;letter-spacing:0.17px;">Rotation</span>
<span style="left:281.5px;top:213px;font-size:25px;line-height:30px;color:#c4c4c4;">X</span>
<div style="left:311.5px;top:211px;width:100px;height:34px;background:#2a2a2a;border:2px solid #1e1e1e;border-radius:6px;"></div>
<span style="left:317.5px;top:213.5px;font-size:25px;line-height:30px;color:#d2d2d2;">0</span>
<span style="left:421px;top:213px;font-size:25px;line-height:30px;color:#c4c4c4;">Y</span>
<div style="left:450.5px;top:211px;width:100px;height:34px;background:#2a2a2a;border:2px solid #1e1e1e;border-radius:6px;"></div>
<span style="left:456.5px;top:213.5px;font-size:25px;line-height:30px;color:#d2d2d2;">0</span>
<span style="left:561px;top:213px;font-size:25px;line-height:30px;color:#c4c4c4;">Z</span>
<div style="left:589.5px;top:211px;width:100px;height:34px;background:#2a2a2a;border:2px solid #1e1e1e;border-radius:6px;"></div>
<span style="left:595.5px;top:213.5px;font-size:25px;line-height:30px;color:#d2d2d2;">0</span>
<span style="left:38px;top:253px;font-size:25px;line-height:30px;color:#c4c4c4;letter-spacing:-0.11px;">Scale</span>
<span style="left:281.5px;top:253px;font-size:25px;line-height:30px;color:#c4c4c4;">X</span>
<div style="left:311.5px;top:251px;width:100px;height:34px;background:#2a2a2a;border:2px solid #1e1e1e;border-radius:6px;"></div>
<span style="left:318.5px;top:253.5px;font-size:25px;line-height:30px;color:#d2d2d2;">1</span>
<span style="left:421px;top:253px;font-size:25px;line-height:30px;color:#c4c4c4;">Y</span>
<div style="left:450.5px;top:251px;width:100px;height:34px;background:#2a2a2a;border:2px solid #1e1e1e;border-radius:6px;"></div>
<span style="left:457.5px;top:253.5px;font-size:25px;line-height:30px;color:#d2d2d2;">1</span>
<span style="left:561px;top:253px;font-size:25px;line-height:30px;color:#c4c4c4;">Z</span>
<div style="left:589.5px;top:251px;width:100px;height:34px;background:#2a2a2a;border:2px solid #1e1e1e;border-radius:6px;"></div>
<span style="left:596.5px;top:253.5px;font-size:25px;line-height:30px;color:#d2d2d2;">1</span>
<svg style="left:238px;top:256px;" width="26" height="22" viewBox="0 0 26 22"><g fill="none" stroke="#c4c4c4" stroke-width="2.200"><path d="M11 6 H7 Q2 6 2 11 Q2 16 7 16 H10"/><path d="M15 6 H19 Q24 6 24 11 Q24 16 19 16 H16"/><path d="M8 11 H18"/><path d="M5 1.500 L21 20.500"/></g></svg>
<div style="left:0px;top:304px;width:698px;height:2px;background:#232323;"></div>
<div style="left:0px;top:306px;width:698px;height:40px;background:#3e3e3e;"></div>
<div style="left:0px;top:346px;width:698px;height:1.5px;background:#303030;"></div>
<svg style="left:14px;top:317px;" width="15.5" height="18" viewBox="0 0 15.5 18"><path d="M0 0 V18 L15.500 9 Z" fill="#6c6c6c"/></svg>
<svg style="left:44px;top:312px;" width="24" height="28" viewBox="0 0 24 28"><path d="M1.5 0 H17 L24 7 V26.5 Q24 28 22.5 28 H1.5 Q0 28 0 26.5 V1.5 Q0 0 1.5 0 Z" fill="#eeeeee"/><path d="M17 0 L24 7 H17 Z" fill="#bdbdbd"/><text x="11.5" y="22.5" font-family="Liberation Sans, sans-serif" font-weight="bold" font-size="22" fill="#2c702e" stroke="#2c702e" stroke-width="0.500" text-anchor="middle">#</text></svg>
<div style="left:80.3px;top:312px;width:27.5px;height:28px;background:#282828;border:2px solid #1b1b1b;border-radius:4.500px;"></div>
<svg style="left:80.3px;top:312px;" width="27.5" height="28" viewBox="0 0 28 28"><path d="M7 14.5 L12 19.5 L21.5 8.5" fill="none" stroke="#e8e8e8" stroke-width="3"/></svg>
<span style="left:120px;top:311.5px;font-size:24px;line-height:30px;color:#dcdcdc;font-weight:bold;letter-spacing:-0.24px;">XR Origin</span>
<svg style="left:582px;top:316px;" width="20" height="20" viewBox="0 0 20 20"><circle cx="10" cy="10" r="10" fill="#c4c4c4"/><text x="10" y="16" font-family="Liberation Sans, sans-serif" font-weight="bold" font-size="17" fill="#3c3c3c" text-anchor="middle">?</text></svg>
<svg style="left:622px;top:316px;" width="20" height="20" viewBox="0 0 20 20"><g stroke="#c4c4c4" stroke-width="2.2" fill="none"><path d="M0 6 H9 M15 6 H20 M12.5 1 V11"/><path d="M0 14.5 H4 M10 14.5 H20 M7.5 9.5 V19.5"/></g></svg>
<svg style="left:668px;top:314.5px;" width="8" height="23" viewBox="0 0 8 23"><circle cx="4" cy="4" r="2.95" fill="#c4c4c4"/><circle cx="4" cy="11.5" r="2.95" fill="#c4c4c4"/><circle cx="4" cy="19" r="2.95" fill="#c4c4c4"/></svg>
<div style="left:0px;top:344px;width:698px;height:2px;background:#232323;"></div>
<div style="left:0px;top:346px;width:698px;height:44px;background:#3e3e3e;"></div>
<div style="left:0px;top:390px;width:698px;height:1.5px;background:#303030;"></div>
<svg style="left:11.5px;top:363px;" width="18" height="15" viewBox="0 0 18 15"><path d="M0 0 H18 L9 15 Z" fill="#6c6c6c"/></svg>
<svg style="left:41px;top:356px;" width="30" height="28.5" viewBox="0 0 30 28.500"><ellipse cx="14.600" cy="14.100" rx="11" ry="14.100" fill="#bdbdbd"/><rect x="0.800" y="3.800" width="28.400" height="18.200" rx="2.500" fill="#f6f6f6"/><path d="M12.300 22 L13.800 17.200 H15.600 L17.100 22 Z" fill="#c4c4c4"/><circle cx="7.700" cy="12.800" r="4.600" fill="#4eb4e4" stroke="#1d4b62" stroke-width="1.100"/><circle cx="22" cy="12.800" r="4.600" fill="#4eb4e4" stroke="#1d4b62" stroke-width="1.100"/></svg>
<div style="left:80.3px;top:356px;width:27.5px;height:28px;background:#282828;border:2px solid #1b1b1b;border-radius:4.500px;"></div>
<svg style="left:80.3px;top:356px;" width="27.5" height="28" viewBox="0 0 28 28"><path d="M7 14.5 L12 19.5 L21.5 8.5" fill="none" stroke="#e8e8e8" stroke-width="3"/></svg>
<span style="left:120px;top:355.5px;font-size:24px;line-height:30px;color:#dcdcdc;font-weight:bold;letter-spacing:0.18px;">AR Tracked Image Manager (Script)</span>
<svg style="left:582px;top:360px;" width="20" height="20" viewBox="0 0 20 20"><circle cx="10" cy="10" r="10" fill="#c4c4c4"/><text x="10" y="16" font-family="Liberation Sans, sans-serif" font-weight="bold" font-size="17" fill="#3c3c3c" text-anchor="middle">?</text></svg>
<svg style="left:622px;top:360px;" width="20" height="20" viewBox="0 0 20 20"><g stroke="#c4c4c4" stroke-width="2.2" fill="none"><path d="M0 6 H9 M15 6 H20 M12.5 1 V11"/><path d="M0 14.5 H4 M10 14.5 H20 M7.5 9.5 V19.5"/></g></svg>
<svg style="left:668px;top:358.5px;" width="8" height="23" viewBox="0 0 8 23"><circle cx="4" cy="4" r="2.95" fill="#c4c4c4"/><circle cx="4" cy="11.5" r="2.95" fill="#c4c4c4"/><circle cx="4" cy="19" r="2.95" fill="#c4c4c4"/></svg>
<span style="left:38px;top:402px;font-size:25px;line-height:30px;color:#8b8b8b;letter-spacing:0.43px;">Script</span>
<div style="left:280.5px;top:399px;width:408.5px;height:34px;background:#353535;border:2px solid #2d2d2d;border-radius:6px;"></div>
<svg style="left:286.5px;top:405.5px;" width="22" height="20.5" viewBox="0 0 30 28.500"><ellipse cx="14.600" cy="14.100" rx="11" ry="14.100" fill="#7a7a7a"/><rect x="0.800" y="3.800" width="28.400" height="18.200" rx="2.500" fill="#9a9a9a"/><path d="M12.300 22 L13.800 17.200 H15.600 L17.100 22 Z" fill="#808080"/><circle cx="7.700" cy="12.800" r="4.600" fill="#4c86a0" stroke="#2a4654" stroke-width="1.100"/><circle cx="22" cy="12.800" r="4.600" fill="#4c86a0" stroke="#2a4654" stroke-width="1.100"/></svg>
<span style="left:314px;top:402px;font-size:25px;line-height:30px;color:#8b8b8b;letter-spacing:0.03px;">ARTrackedImageManager</span>
<svg style="left:660px;top:406.5px;" width="20" height="20" viewBox="0 0 20 20"><circle cx="10" cy="10" r="8.4" fill="none" stroke="#7a7a7a" stroke-width="2"/><circle cx="10" cy="10" r="3.6" fill="#7a7a7a"/></svg>
<div style="left:36.5px;top:436.5px;width:643.5px;height:100.5px;background:#464646;border:2px solid #242424;border-radius:6px;"></div>
<div style="left:38.5px;top:438.5px;width:639.5px;height:37.5px;background:#363636;border-radius:4px 4px 0 0;"></div>
<div style="left:38.5px;top:476px;width:639.5px;height:2px;background:#242424;"></div>
<div style="left:38.5px;top:438.5px;width:659.5px;height:38px;overflow:hidden;">
<span style="left:13.5px;top:3.5px;font-size:25px;line-height:30px;color:#d2d2d2;letter-spacing:0.17px;">Trackables Changed (ARTrackablesChangedEventArgs`1</span>
</div>
<span style="left:50px;top:495px;font-size:25px;line-height:30px;color:#d2d2d2;letter-spacing:0.35px;">List is empty</span>
<div style="left:545px;top:535px;width:106px;height:46px;background:#424242;border:2px solid #242424;border-top:none;border-radius:0 0 6px 6px;"></div>
<svg style="left:567px;top:552.5px;" width="18" height="18" viewBox="0 0 18 18"><path d="M9 0 V18 M0 9 H18" stroke="#e8e8e8" stroke-width="3.600"/></svg>
<div style="left:614px;top:559px;width:12px;height:3.5px;background:#e8e8e8;"></div>
<span style="left:38px;top:587.5px;font-size:25px;line-height:30px;color:#c4c4c4;letter-spacing:0.16px;">Serialized Library</span>
<div style="left:280.5px;top:585px;width:408.5px;height:34px;background:#2a2a2a;border:2px solid #1e1e1e;border-radius:6px;"></div>
<div style="left:652px;top:587px;width:35px;height:30px;background:#373737;border-radius:0 4px 4px 0;"></div>
<svg style="left:287.5px;top:591.5px;" width="22" height="20.5" viewBox="0 0 30 28.500"><ellipse cx="14.600" cy="14.100" rx="11" ry="14.100" fill="#bdbdbd"/><rect x="0.800" y="3.800" width="28.400" height="18.200" rx="2.500" fill="#f6f6f6"/><path d="M12.300 22 L13.800 17.200 H15.600 L17.100 22 Z" fill="#c4c4c4"/><circle cx="7.700" cy="12.800" r="4.600" fill="#4eb4e4" stroke="#1d4b62" stroke-width="1.100"/><circle cx="22" cy="12.800" r="4.600" fill="#4eb4e4" stroke="#1d4b62" stroke-width="1.100"/></svg>
<div style="left:314px;top:587px;width:338px;height:30px;overflow:hidden;">
<span style="left:0px;top:0.5px;font-size:25px;line-height:30px;color:#d2d2d2;">XFactoryImageLibrary (XR Reference Image Library)</span>
</div>
<svg style="left:660px;top:592.5px;" width="20" height="20" viewBox="0 0 20 20"><circle cx="10" cy="10" r="8.4" fill="none" stroke="#c4c4c4" stroke-width="2"/><circle cx="10" cy="10" r="3.6" fill="#c4c4c4"/></svg>
<span style="left:38px;top:628px;font-size:25px;line-height:30px;color:#c4c4c4;letter-spacing:0.08px;">Max Number Of M...</span>
<div style="left:280.5px;top:626px;width:421.5px;height:33px;background:#2a2a2a;border:2px solid #1e1e1e;border-radius:6px;"></div>
<span style="left:290px;top:628px;font-size:25px;line-height:30px;color:#d2d2d2;">0</span>
<span style="left:38px;top:667.5px;font-size:25px;line-height:30px;color:#c4c4c4;letter-spacing:-0.05px;">Tracked Image Pre...</span>
<div style="left:280.5px;top:665px;width:408.5px;height:34px;background:#2a2a2a;border:2px solid #1e1e1e;border-radius:6px;"></div>
<div style="left:652px;top:667px;width:35px;height:30px;background:#373737;border-radius:0 4px 4px 0;"></div>
<div style="left:290px;top:667px;width:362px;height:30px;overflow:hidden;">
<span style="left:0px;top:0.5px;font-size:25px;line-height:30px;color:#b4b4b4;letter-spacing:0.08px;">None (Game Object)</span>
</div>
<svg style="left:660px;top:672.5px;" width="20" height="20" viewBox="0 0 20 20"><circle cx="10" cy="10" r="8.4" fill="none" stroke="#c4c4c4" stroke-width="2"/><circle cx="10" cy="10" r="3.6" fill="#c4c4c4"/></svg>
<div style="left:0px;top:718px;width:698px;height:2px;background:#232323;"></div>
<div style="left:0px;top:720px;width:698px;height:38px;background:#3e3e3e;"></div>
<div style="left:0px;top:758px;width:698px;height:1.5px;background:#303030;"></div>
<svg style="left:11.5px;top:731px;" width="18" height="15" viewBox="0 0 18 15"><path d="M0 0 H18 L9 15 Z" fill="#6c6c6c"/></svg>
<svg style="left:41px;top:724px;" width="30" height="28.5" viewBox="0 0 30 28.500"><ellipse cx="14.600" cy="14.100" rx="11" ry="14.100" fill="#bdbdbd"/><rect x="0.800" y="3.800" width="28.400" height="18.200" rx="2.500" fill="#f6f6f6"/><path d="M12.300 22 L13.800 17.200 H15.600 L17.100 22 Z" fill="#c4c4c4"/><circle cx="7.700" cy="12.800" r="4.600" fill="#4eb4e4" stroke="#1d4b62" stroke-width="1.100"/><circle cx="22" cy="12.800" r="4.600" fill="#4eb4e4" stroke="#1d4b62" stroke-width="1.100"/></svg>
<div style="left:80.3px;top:724px;width:27.5px;height:28px;background:#282828;border:2px solid #1b1b1b;border-radius:4.500px;"></div>
<svg style="left:80.3px;top:724px;" width="27.5" height="28" viewBox="0 0 28 28"><path d="M7 14.5 L12 19.5 L21.5 8.5" fill="none" stroke="#e8e8e8" stroke-width="3"/></svg>
<span style="left:120px;top:723.5px;font-size:24px;line-height:30px;color:#dcdcdc;font-weight:bold;letter-spacing:0.17px;">AR Anchor Manager (Script)</span>
<svg style="left:582px;top:728px;" width="20" height="20" viewBox="0 0 20 20"><circle cx="10" cy="10" r="10" fill="#c4c4c4"/><text x="10" y="16" font-family="Liberation Sans, sans-serif" font-weight="bold" font-size="17" fill="#3c3c3c" text-anchor="middle">?</text></svg>
<svg style="left:622px;top:728px;" width="20" height="20" viewBox="0 0 20 20"><g stroke="#c4c4c4" stroke-width="2.2" fill="none"><path d="M0 6 H9 M15 6 H20 M12.5 1 V11"/><path d="M0 14.5 H4 M10 14.5 H20 M7.5 9.5 V19.5"/></g></svg>
<svg style="left:668px;top:726.5px;" width="8" height="23" viewBox="0 0 8 23"><circle cx="4" cy="4" r="2.95" fill="#c4c4c4"/><circle cx="4" cy="11.5" r="2.95" fill="#c4c4c4"/><circle cx="4" cy="19" r="2.95" fill="#c4c4c4"/></svg>
<span style="left:38px;top:770.5px;font-size:25px;line-height:30px;color:#8b8b8b;letter-spacing:0.43px;">Script</span>
<div style="left:280.5px;top:767.5px;width:408.5px;height:34px;background:#353535;border:2px solid #2d2d2d;border-radius:6px;"></div>
<svg style="left:286.5px;top:774px;" width="22" height="20.5" viewBox="0 0 30 28.500"><ellipse cx="14.600" cy="14.100" rx="11" ry="14.100" fill="#7a7a7a"/><rect x="0.800" y="3.800" width="28.400" height="18.200" rx="2.500" fill="#9a9a9a"/><path d="M12.300 22 L13.800 17.200 H15.600 L17.100 22 Z" fill="#808080"/><circle cx="7.700" cy="12.800" r="4.600" fill="#4c86a0" stroke="#2a4654" stroke-width="1.100"/><circle cx="22" cy="12.800" r="4.600" fill="#4c86a0" stroke="#2a4654" stroke-width="1.100"/></svg>
<span style="left:314px;top:770.5px;font-size:25px;line-height:30px;color:#8b8b8b;letter-spacing:0.03px;">ARAnchorManager</span>
<svg style="left:660px;top:775px;" width="20" height="20" viewBox="0 0 20 20"><circle cx="10" cy="10" r="8.4" fill="none" stroke="#7a7a7a" stroke-width="2"/><circle cx="10" cy="10" r="3.6" fill="#7a7a7a"/></svg>
<div style="left:36.5px;top:805px;width:643.5px;height:100.5px;background:#464646;border:2px solid #242424;border-radius:6px;"></div>
<div style="left:38.5px;top:807px;width:639.5px;height:37.5px;background:#363636;border-radius:4px 4px 0 0;"></div>
<div style="left:38.5px;top:844.5px;width:639.5px;height:2px;background:#242424;"></div>
<div style="left:38.5px;top:807px;width:659.5px;height:38px;overflow:hidden;">
<span style="left:13.5px;top:3.5px;font-size:25px;line-height:30px;color:#d2d2d2;letter-spacing:0.17px;">Trackables Changed (ARTrackablesChangedEventArgs`1</span>
</div>
<span style="left:50px;top:863.5px;font-size:25px;line-height:30px;color:#d2d2d2;letter-spacing:0.35px;">List is empty</span>
<div style="left:545px;top:903.5px;width:106px;height:46px;background:#424242;border:2px solid #242424;border-top:none;border-radius:0 0 6px 6px;"></div>
<svg style="left:567px;top:921px;" width="18" height="18" viewBox="0 0 18 18"><path d="M9 0 V18 M0 9 H18" stroke="#e8e8e8" stroke-width="3.600"/></svg>
<div style="left:614px;top:927.5px;width:12px;height:3.5px;background:#e8e8e8;"></div>
<span style="left:38px;top:955.5px;font-size:25px;line-height:30px;color:#c4c4c4;letter-spacing:0.17px;">Anchor Prefab</span>
<div style="left:280.5px;top:953px;width:408.5px;height:34px;background:#2a2a2a;border:2px solid #1e1e1e;border-radius:6px;"></div>
<div style="left:652px;top:955px;width:35px;height:30px;background:#373737;border-radius:0 4px 4px 0;"></div>
<div style="left:290px;top:955px;width:362px;height:30px;overflow:hidden;">
<span style="left:0px;top:0.5px;font-size:25px;line-height:30px;color:#b4b4b4;letter-spacing:0.08px;">None (Game Object)</span>
</div>
<svg style="left:660px;top:960.5px;" width="20" height="20" viewBox="0 0 20 20"><circle cx="10" cy="10" r="8.4" fill="none" stroke="#c4c4c4" stroke-width="2"/><circle cx="10" cy="10" r="3.6" fill="#c4c4c4"/></svg>
<div style="left:0px;top:1003px;width:698px;height:2px;background:#232323;"></div>
<div style="left:0px;top:1005px;width:698px;height:41px;background:#3e3e3e;"></div>
<div style="left:0px;top:1046px;width:698px;height:1.5px;background:#303030;"></div>
<svg style="left:11.5px;top:1019px;" width="18" height="15" viewBox="0 0 18 15"><path d="M0 0 H18 L9 15 Z" fill="#6c6c6c"/></svg>
<svg style="left:44px;top:1012px;" width="24" height="28" viewBox="0 0 24 28"><path d="M1.5 0 H17 L24 7 V26.5 Q24 28 22.5 28 H1.5 Q0 28 0 26.5 V1.5 Q0 0 1.5 0 Z" fill="#eeeeee"/><path d="M17 0 L24 7 H17 Z" fill="#bdbdbd"/><text x="11.5" y="22.5" font-family="Liberation Sans, sans-serif" font-weight="bold" font-size="22" fill="#2c702e" stroke="#2c702e" stroke-width="0.500" text-anchor="middle">#</text></svg>
<div style="left:80.3px;top:1012px;width:27.5px;height:28px;background:#282828;border:2px solid #1b1b1b;border-radius:4.500px;"></div>
<svg style="left:80.3px;top:1012px;" width="27.5" height="28" viewBox="0 0 28 28"><path d="M7 14.5 L12 19.5 L21.5 8.5" fill="none" stroke="#e8e8e8" stroke-width="3"/></svg>
<span style="left:120px;top:1011.5px;font-size:24px;line-height:30px;color:#dcdcdc;font-weight:bold;letter-spacing:0.2px;">Tracked Image Anchor (Script)</span>
<svg style="left:582px;top:1016px;" width="20" height="20" viewBox="0 0 20 20"><circle cx="10" cy="10" r="10" fill="#c4c4c4"/><text x="10" y="16" font-family="Liberation Sans, sans-serif" font-weight="bold" font-size="17" fill="#3c3c3c" text-anchor="middle">?</text></svg>
<svg style="left:622px;top:1016px;" width="20" height="20" viewBox="0 0 20 20"><g stroke="#c4c4c4" stroke-width="2.2" fill="none"><path d="M0 6 H9 M15 6 H20 M12.5 1 V11"/><path d="M0 14.5 H4 M10 14.5 H20 M7.5 9.5 V19.5"/></g></svg>
<svg style="left:668px;top:1014.5px;" width="8" height="23" viewBox="0 0 8 23"><circle cx="4" cy="4" r="2.95" fill="#c4c4c4"/><circle cx="4" cy="11.5" r="2.95" fill="#c4c4c4"/><circle cx="4" cy="19" r="2.95" fill="#c4c4c4"/></svg>
<span style="left:38px;top:1058px;font-size:25px;line-height:30px;color:#8b8b8b;letter-spacing:0.43px;">Script</span>
<div style="left:280.5px;top:1055px;width:408.5px;height:34px;background:#353535;border:2px solid #2d2d2d;border-radius:6px;"></div>
<svg style="left:288px;top:1061px;" width="20" height="22" viewBox="0 0 20 22"><path d="M1.5 0 H14 L20 6 V20.5 Q20 22 18.5 22 H1.5 Q0 22 0 20.5 V1.5 Q0 0 1.5 0 Z" fill="#7b7b7b"/><text x="9.5" y="18" font-family="Liberation Sans, sans-serif" font-weight="bold" font-size="17" fill="#41603f" text-anchor="middle">#</text></svg>
<span style="left:314px;top:1058px;font-size:25px;line-height:30px;color:#8b8b8b;letter-spacing:0.22px;">TrackedImageAnchor</span>
<svg style="left:660px;top:1062.5px;" width="20" height="20" viewBox="0 0 20 20"><circle cx="10" cy="10" r="8.4" fill="none" stroke="#7a7a7a" stroke-width="2"/><circle cx="10" cy="10" r="3.6" fill="#7a7a7a"/></svg>
<span style="left:38px;top:1097.5px;font-size:25px;line-height:30px;color:#c4c4c4;">Engine V8 Prefab</span>
<div style="left:280.5px;top:1095px;width:408.5px;height:34px;background:#2a2a2a;border:2px solid #1e1e1e;border-radius:6px;"></div>
<div style="left:652px;top:1097px;width:35px;height:30px;background:#373737;border-radius:0 4px 4px 0;"></div>
<svg style="left:287.5px;top:1100.5px;" width="21" height="23" viewBox="0 0 21 23"><path d="M10.500 0 L21 5.700 V17.300 L10.500 23 L0 17.300 V5.700 Z" fill="#5cb8f0"/><path d="M10.500 11.500 L21 5.700 V17.300 L10.500 23 Z" fill="#3a8fd0"/><path d="M10.500 11.500 L0 5.700 L10.500 0 L21 5.700 Z" fill="#9adcff"/></svg>
<div style="left:314px;top:1097px;width:338px;height:30px;overflow:hidden;">
<span style="left:0px;top:0.5px;font-size:25px;line-height:30px;color:#d2d2d2;letter-spacing:-0.04px;">Engine V8</span>
</div>
<svg style="left:660px;top:1102.5px;" width="20" height="20" viewBox="0 0 20 20"><circle cx="10" cy="10" r="8.4" fill="none" stroke="#c4c4c4" stroke-width="2"/><circle cx="10" cy="10" r="3.6" fill="#c4c4c4"/></svg>
<div style="left:122px;top:1166px;width:456px;height:44px;background:#585858;border:2px solid #2e2e2e;border-radius:5px;"></div>
<span style="left:258px;top:1172.5px;font-size:25px;line-height:30px;color:#e0e0e0;letter-spacing:0.33px;">Add Component</span>
<div style="left:0px;top:1930px;width:698px;height:2.2px;background:#232323;"></div>
<div style="left:0px;top:1932.2px;width:698px;height:50px;background:#3c3c3c;"></div>
<span style="left:8px;top:1941px;font-size:24px;line-height:30px;color:#c4c4c4;font-weight:bold;letter-spacing:0.08px;">Asset Labels</span>
<div style="left:0px;top:1982px;width:698px;height:2.4px;background:#232323;"></div>
<div style="left:0px;top:1984.4px;width:698px;height:12px;background:#3e3e3e;"></div>
</div>
<div style="left:2750px;top:461px;width:704.2px;height:379px;background:transparent;border:10px solid #fefc54;"></div>
<div style="left:2750px;top:1115px;width:704.2px;height:158px;background:transparent;border:10px solid #fefc54;"></div>
<div style="left:3298px;top:2120px;width:2px;height:40px;background:#1f1f1f;"></div>
<div style="left:3350px;top:2120px;width:2px;height:40px;background:#1f1f1f;"></div>
<div style="left:3402px;top:2120px;width:2px;height:40px;background:#1f1f1f;"></div>
<div style="left:3453.5px;top:2120px;width:2px;height:40px;background:#1f1f1f;"></div>
<svg style="left:3311px;top:2126px;" width="28" height="29" viewBox="0 0 28 29"><path d="M14 4 Q23.500 4 23.500 16.500 Q23.500 28.500 14 28.500 Q4.500 28.500 4.500 16.500 Q4.500 4 14 4 Z" fill="#c4c4c4"/><g stroke="#c4c4c4" stroke-width="2.400" fill="none" stroke-linecap="round"><path d="M10 5 Q9.500 2 6.500 1.200 M18 5 Q18.500 2 21.500 1.200"/><path d="M6 12 Q3.500 11.500 2.500 7 M22 12 Q24.500 11.500 25.500 7 M5 17.500 Q2 17 1 19.500 M23 17.500 Q26 17 27 19.500 M6 23 Q3 23.500 2.500 27.500 M22 23 Q25 23.500 25.500 27.500"/></g><path d="M-0.500 2.200 L26.500 30.200" stroke="#141414" stroke-width="2.800"/><path d="M1 0.500 L28 28.500" stroke="#c4c4c4" stroke-width="2.200"/></svg>
<svg style="left:3363.5px;top:2126px;" width="28" height="29" viewBox="0 0 28 29"><g fill="#c4c4c4"><ellipse cx="14" cy="6" rx="11.500" ry="5.600"/><path d="M2.500 10 Q14 17.500 25.500 10 V15 Q14 22.500 2.500 15 Z"/><path d="M2.500 18.500 Q14 26 25.500 18.500 V22 Q14 30.500 2.500 22 Z"/></g><path d="M-0.500 2.200 L26.500 30.200" stroke="#141414" stroke-width="2.800"/><path d="M1 0.500 L28 28.500" stroke="#c4c4c4" stroke-width="2.200"/></svg>
<svg style="left:3415px;top:2126px;" width="28" height="28" viewBox="0 0 28 28"><circle cx="14" cy="14" r="12.800" fill="none" stroke="#c4c4c4" stroke-width="2.200"/><path d="M8.500 14 L12.500 18 L20 10.500" fill="none" stroke="#c4c4c4" stroke-width="3"/></svg>
</body></html>
